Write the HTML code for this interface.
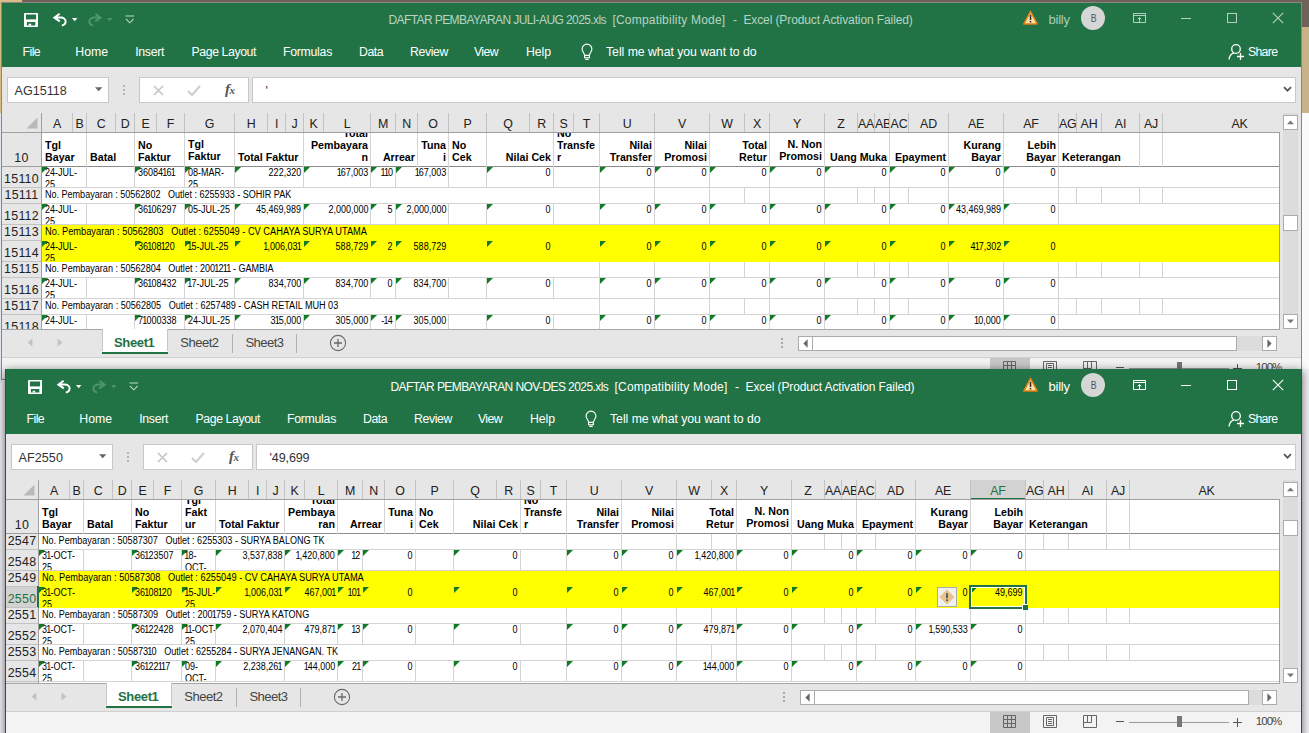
<!DOCTYPE html>
<html><head><meta charset="utf-8"><title>Excel</title><style>
html,body{margin:0;padding:0;}
body{width:1309px;height:733px;overflow:hidden;position:relative;background:#f2f2f5;font-family:'Liberation Sans',sans-serif;}
div,svg{position:absolute;}
i{font-style:normal;margin:0 -0.9px;}
</style></head><body>
<div style="left:0px;top:0px;width:1309px;height:733px;background:#f2f2f5;"></div>
<div style="left:0px;top:0px;width:1309px;height:28px;background:#6e6258;"></div>
<div style="left:0px;top:0px;width:22px;height:3px;background:#d9bd86;"></div>
<div style="left:0px;top:3px;width:2px;height:110px;background:#d6b97f;"></div>
<div style="left:0px;top:113px;width:2px;height:270px;background:#dfe6ee;"></div>
<div style="left:1302px;top:27px;width:7px;height:86px;background:#c9b188;"></div>
<div style="left:1302px;top:113px;width:7px;height:256px;background:#fbfbfd;"></div>
<div style="left:1px;top:2px;width:1301px;height:378px;background:#e6e6e6;border:1px solid #8a8686;box-sizing:border-box;"></div>
<div style="left:2px;top:3px;width:1299px;height:64px;background:#217346;"></div>
<svg style="left:24px;top:13px;" width="14" height="14" viewBox="0 0 14 14"><rect x="0" y="0" width="14" height="14" rx="0.8" fill="#fff"/><rect x="1.9" y="1.5" width="10.2" height="4.9" fill="#217346"/><rect x="2.9" y="9" width="8.4" height="3.5" fill="#217346"/><rect x="4.6" y="10.7" width="2.6" height="1.9" fill="#fff"/></svg>
<svg style="left:52px;top:12px;" width="16" height="16" viewBox="0 0 16 16"><path d="M7.6 1.8 L2.4 5.7 L7.8 9.3 M3 5.6 H8.6 C11.6 5.6 13.6 7.4 13.6 9.6 C13.6 11.8 12 13.2 9.8 13.6" fill="none" stroke="#fff" stroke-width="2" stroke-linecap="butt" stroke-linejoin="miter"/></svg>
<svg style="left:72px;top:18px;" width="6" height="4" viewBox="0 0 6 4"><path d="M0 0h5.4l-2.7 3.2z" fill="#fff"/></svg>
<svg style="left:87px;top:12px;" width="16" height="16" viewBox="0 0 16 16"><path d="M8.4 1.8 L13.6 5.7 L8.2 9.3 M13 5.6 H7.4 C4.4 5.6 2.4 7.4 2.4 9.6 C2.4 11.8 4 13.2 6.2 13.6" fill="none" stroke="#4f9470" stroke-width="2" stroke-linecap="butt" stroke-linejoin="miter"/></svg>
<svg style="left:107px;top:18px;" width="6" height="4" viewBox="0 0 6 4"><path d="M0 0h5.4l-2.7 3.2z" fill="#4f9470"/></svg>
<svg style="left:125px;top:14px;" width="10" height="10" viewBox="0 0 10 10"><path d="M0.5 2h8.6" stroke="#b4d2c1" stroke-width="1.1"/><path d="M1 5l3.8 3.8L8.6 5" fill="none" stroke="#b4d2c1" stroke-width="1.1"/></svg>
<div style="left:388.4px;top:13px;font-size:12px;color:#b9d3c4;font-weight:normal;letter-spacing:-0.585px;white-space:pre;line-height:14px;font-family:'Liberation Sans', sans-serif;">DAFTAR PEMBAYARAN JULI-AUG 2025.xls</div>
<div style="left:612.4px;top:13px;font-size:12px;color:#b9d3c4;font-weight:normal;letter-spacing:0.214px;white-space:pre;line-height:14px;font-family:'Liberation Sans', sans-serif;">[Compatibility Mode]</div>
<div style="left:733px;top:13px;font-size:12px;color:#b9d3c4;font-weight:normal;white-space:pre;line-height:14px;font-family:'Liberation Sans', sans-serif;">-</div>
<div style="left:743.4px;top:13px;font-size:12px;color:#b9d3c4;font-weight:normal;letter-spacing:-0.102px;white-space:pre;line-height:14px;font-family:'Liberation Sans', sans-serif;">Excel (Product Activation Failed)</div>
<svg style="left:1022px;top:10px;" width="17" height="16" viewBox="0 0 17 16"><path d="M8.5 1.3L15.2 13.9H1.8Z" fill="#f9e2a4" stroke="#e27d12" stroke-width="1.5" stroke-linejoin="round"/><path d="M8.5 4.8v5.2" stroke="#2a2a2a" stroke-width="1.5"/><rect x="7.75" y="11" width="1.5" height="1.5" fill="#2a2a2a"/></svg>
<div style="left:1048.4px;top:11.5px;font-size:13px;color:#a9cdb9;font-weight:normal;letter-spacing:-0.181px;white-space:pre;line-height:16px;font-family:'Liberation Sans', sans-serif;">billy</div>
<div style="left:1081px;top:6px;width:24px;height:24px;background:#d6d6d6;border-radius:50%;"></div>
<div style="left:1089.8px;top:11.5px;font-size:11px;color:#505068;font-weight:normal;white-space:pre;line-height:13px;font-family:'Liberation Sans', sans-serif;transform:scaleX(0.8);transform-origin:50% 50%;">B</div>
<svg style="left:1133px;top:13px;" width="13" height="10" viewBox="0 0 13 10"><path d="M0.5 0.5h12v9h-12z M0.5 2.5h12 M6.5 9.5v-5 M4.7 6.3l1.8-1.8 1.8 1.8" fill="none" stroke="#b4d2c2" stroke-width="1"/></svg>
<div style="left:1181px;top:18px;width:10px;height:1px;background:#b4d2c2;"></div>
<div style="left:1227px;top:13px;width:10px;height:10px;border:1px solid #b4d2c2;box-sizing:border-box;"></div>
<svg style="left:1272px;top:12px;" width="12" height="12" viewBox="0 0 12 12"><path d="M0.8 0.8l10.4 10.4M11.2 0.8L0.8 11.2" stroke="#b4d2c2" stroke-width="1.1"/></svg>
<svg style="left:1228px;top:43px;" width="17" height="18" viewBox="0 0 17 18"><circle cx="8" cy="6" r="4.3" fill="none" stroke="#fff" stroke-width="1.3"/><path d="M1 16.5c0.6-4 2.6-6 5-6.6" fill="none" stroke="#fff" stroke-width="1.3"/><path d="M12.5 10v7M9 13.5h7" stroke="#fff" stroke-width="1.3"/></svg>
<div style="left:1247.9px;top:45px;font-size:12.3px;color:#fff;font-weight:normal;letter-spacing:-0.666px;white-space:pre;line-height:15px;font-family:'Liberation Sans', sans-serif;">Share</div>
<div style="left:22.6px;top:45px;font-size:12.3px;color:#fff;font-weight:normal;letter-spacing:-0.582px;white-space:pre;line-height:15px;font-family:'Liberation Sans', sans-serif;">File</div>
<div style="left:75.3px;top:45px;font-size:12.3px;color:#fff;font-weight:normal;letter-spacing:-0.028px;white-space:pre;line-height:15px;font-family:'Liberation Sans', sans-serif;">Home</div>
<div style="left:135.3px;top:45px;font-size:12.3px;color:#fff;font-weight:normal;letter-spacing:-0.344px;white-space:pre;line-height:15px;font-family:'Liberation Sans', sans-serif;">Insert</div>
<div style="left:191.5px;top:45px;font-size:12.3px;color:#fff;font-weight:normal;letter-spacing:-0.415px;white-space:pre;line-height:15px;font-family:'Liberation Sans', sans-serif;">Page Layout</div>
<div style="left:283px;top:45px;font-size:12.3px;color:#fff;font-weight:normal;letter-spacing:-0.281px;white-space:pre;line-height:15px;font-family:'Liberation Sans', sans-serif;">Formulas</div>
<div style="left:359px;top:45px;font-size:12.3px;color:#fff;font-weight:normal;letter-spacing:-0.496px;white-space:pre;line-height:15px;font-family:'Liberation Sans', sans-serif;">Data</div>
<div style="left:410px;top:45px;font-size:12.3px;color:#fff;font-weight:normal;letter-spacing:-0.388px;white-space:pre;line-height:15px;font-family:'Liberation Sans', sans-serif;">Review</div>
<div style="left:474px;top:45px;font-size:12.3px;color:#fff;font-weight:normal;letter-spacing:-0.609px;white-space:pre;line-height:15px;font-family:'Liberation Sans', sans-serif;">View</div>
<div style="left:526px;top:45px;font-size:12.3px;color:#fff;font-weight:normal;letter-spacing:-0.074px;white-space:pre;line-height:15px;font-family:'Liberation Sans', sans-serif;">Help</div>
<div style="left:606px;top:45px;font-size:12.3px;color:#fff;font-weight:normal;letter-spacing:-0.046px;white-space:pre;line-height:15px;font-family:'Liberation Sans', sans-serif;">Tell me what you want to do</div>
<svg style="left:581px;top:43px;" width="12" height="18" viewBox="0 0 12 18"><path d="M3.6 12.3C3.4 10 1.1 8.7 1.1 6a4.9 4.9 0 0 1 9.8 0C10.9 8.7 8.6 10 8.4 12.3z M3.6 12.3v2.4h4.8v-2.4 M4.3 16.4h3.4" fill="none" stroke="#fff" stroke-width="1.15"/></svg>
<div style="left:7px;top:77px;width:102px;height:26px;background:#fff;border:1px solid #c8c8c8;box-sizing:border-box;"></div>
<div style="left:14.5px;top:84px;font-size:12.6px;color:#333;font-weight:normal;letter-spacing:0.003px;white-space:pre;line-height:15px;font-family:'Liberation Sans', sans-serif;">AG15118</div>
<svg style="left:95px;top:87px;" width="8" height="5" viewBox="0 0 8 5"><path d="M0 0.3h7.4l-3.7 4z" fill="#666"/></svg>
<div style="left:123px;top:85px;width:2px;height:2px;background:#b4b4b4;"></div>
<div style="left:123px;top:89px;width:2px;height:2px;background:#b4b4b4;"></div>
<div style="left:123px;top:93px;width:2px;height:2px;background:#b4b4b4;"></div>
<div style="left:139px;top:77px;width:110px;height:26px;background:#fff;border:1px solid #c8c8c8;box-sizing:border-box;"></div>
<svg style="left:153px;top:85px;" width="11" height="11" viewBox="0 0 11 11"><path d="M1 1l9 9M10 1l-9 9" stroke="#c6c6c6" stroke-width="1.7"/></svg>
<svg style="left:187px;top:85px;" width="14" height="11" viewBox="0 0 14 11"><path d="M1 6l4 4 8-9" fill="none" stroke="#d0d0d0" stroke-width="2.2"/></svg>
<div style="left:225px;top:80px;font-size:15px;color:#555;font-weight:bold;white-space:pre;line-height:18px;font-style:italic;font-family:'Liberation Serif', serif;">f</div>
<div style="left:229.5px;top:84px;font-size:11px;color:#555;font-weight:bold;white-space:pre;line-height:13px;font-style:italic;font-family:'Liberation Serif', serif;">x</div>
<div style="left:252px;top:77px;width:1044px;height:26px;background:#fff;border:1px solid #c8c8c8;box-sizing:border-box;"></div>
<div style="left:265.5px;top:84px;font-size:12.6px;color:#333;font-weight:normal;white-space:pre;line-height:15px;font-family:'Liberation Sans', sans-serif;">&#x27;</div>
<svg style="left:1283px;top:86px;" width="9" height="7" viewBox="0 0 9 7"><path d="M1 1.2l3.5 3.5 3.5-3.5" fill="none" stroke="#555" stroke-width="1.7"/></svg>
<svg style="left:26px;top:117px;" width="12" height="12" viewBox="0 0 12 12"><path d="M11.5 0.5v11h-11z" fill="#b9b9b9"/></svg>
<div style="left:42px;top:116px;width:30px;height:16px;line-height:16px;text-align:center;font-size:12.4px;color:#212121;overflow:hidden;letter-spacing:-0.2px;font-family:'Liberation Sans', sans-serif">A</div>
<div style="left:73px;top:116px;width:13px;height:16px;line-height:16px;text-align:center;font-size:12.4px;color:#212121;overflow:hidden;letter-spacing:-0.2px;font-family:'Liberation Sans', sans-serif">B</div>
<div style="left:87px;top:116px;width:28px;height:16px;line-height:16px;text-align:center;font-size:12.4px;color:#212121;overflow:hidden;letter-spacing:-0.2px;font-family:'Liberation Sans', sans-serif">C</div>
<div style="left:116px;top:116px;width:18px;height:16px;line-height:16px;text-align:center;font-size:12.4px;color:#212121;overflow:hidden;letter-spacing:-0.2px;font-family:'Liberation Sans', sans-serif">D</div>
<div style="left:135px;top:116px;width:21px;height:16px;line-height:16px;text-align:center;font-size:12.4px;color:#212121;overflow:hidden;letter-spacing:-0.2px;font-family:'Liberation Sans', sans-serif">E</div>
<div style="left:157px;top:116px;width:27px;height:16px;line-height:16px;text-align:center;font-size:12.4px;color:#212121;overflow:hidden;letter-spacing:-0.2px;font-family:'Liberation Sans', sans-serif">F</div>
<div style="left:185px;top:116px;width:49px;height:16px;line-height:16px;text-align:center;font-size:12.4px;color:#212121;overflow:hidden;letter-spacing:-0.2px;font-family:'Liberation Sans', sans-serif">G</div>
<div style="left:235px;top:116px;width:32px;height:16px;line-height:16px;text-align:center;font-size:12.4px;color:#212121;overflow:hidden;letter-spacing:-0.2px;font-family:'Liberation Sans', sans-serif">H</div>
<div style="left:268px;top:116px;width:17px;height:16px;line-height:16px;text-align:center;font-size:12.4px;color:#212121;overflow:hidden;letter-spacing:-0.2px;font-family:'Liberation Sans', sans-serif">I</div>
<div style="left:286px;top:116px;width:17px;height:16px;line-height:16px;text-align:center;font-size:12.4px;color:#212121;overflow:hidden;letter-spacing:-0.2px;font-family:'Liberation Sans', sans-serif">J</div>
<div style="left:304px;top:116px;width:19px;height:16px;line-height:16px;text-align:center;font-size:12.4px;color:#212121;overflow:hidden;letter-spacing:-0.2px;font-family:'Liberation Sans', sans-serif">K</div>
<div style="left:324px;top:116px;width:46px;height:16px;line-height:16px;text-align:center;font-size:12.4px;color:#212121;overflow:hidden;letter-spacing:-0.2px;font-family:'Liberation Sans', sans-serif">L</div>
<div style="left:371px;top:116px;width:24px;height:16px;line-height:16px;text-align:center;font-size:12.4px;color:#212121;overflow:hidden;letter-spacing:-0.2px;font-family:'Liberation Sans', sans-serif">M</div>
<div style="left:396px;top:116px;width:21px;height:16px;line-height:16px;text-align:center;font-size:12.4px;color:#212121;overflow:hidden;letter-spacing:-0.2px;font-family:'Liberation Sans', sans-serif">N</div>
<div style="left:418px;top:116px;width:30px;height:16px;line-height:16px;text-align:center;font-size:12.4px;color:#212121;overflow:hidden;letter-spacing:-0.2px;font-family:'Liberation Sans', sans-serif">O</div>
<div style="left:449px;top:116px;width:37px;height:16px;line-height:16px;text-align:center;font-size:12.4px;color:#212121;overflow:hidden;letter-spacing:-0.2px;font-family:'Liberation Sans', sans-serif">P</div>
<div style="left:487px;top:116px;width:42px;height:16px;line-height:16px;text-align:center;font-size:12.4px;color:#212121;overflow:hidden;letter-spacing:-0.2px;font-family:'Liberation Sans', sans-serif">Q</div>
<div style="left:530px;top:116px;width:23px;height:16px;line-height:16px;text-align:center;font-size:12.4px;color:#212121;overflow:hidden;letter-spacing:-0.2px;font-family:'Liberation Sans', sans-serif">R</div>
<div style="left:554px;top:116px;width:19px;height:16px;line-height:16px;text-align:center;font-size:12.4px;color:#212121;overflow:hidden;letter-spacing:-0.2px;font-family:'Liberation Sans', sans-serif">S</div>
<div style="left:574px;top:116px;width:25px;height:16px;line-height:16px;text-align:center;font-size:12.4px;color:#212121;overflow:hidden;letter-spacing:-0.2px;font-family:'Liberation Sans', sans-serif">T</div>
<div style="left:600px;top:116px;width:54px;height:16px;line-height:16px;text-align:center;font-size:12.4px;color:#212121;overflow:hidden;letter-spacing:-0.2px;font-family:'Liberation Sans', sans-serif">U</div>
<div style="left:655px;top:116px;width:54px;height:16px;line-height:16px;text-align:center;font-size:12.4px;color:#212121;overflow:hidden;letter-spacing:-0.2px;font-family:'Liberation Sans', sans-serif">V</div>
<div style="left:710px;top:116px;width:34px;height:16px;line-height:16px;text-align:center;font-size:12.4px;color:#212121;overflow:hidden;letter-spacing:-0.2px;font-family:'Liberation Sans', sans-serif">W</div>
<div style="left:745px;top:116px;width:24px;height:16px;line-height:16px;text-align:center;font-size:12.4px;color:#212121;overflow:hidden;letter-spacing:-0.2px;font-family:'Liberation Sans', sans-serif">X</div>
<div style="left:770px;top:116px;width:54px;height:16px;line-height:16px;text-align:center;font-size:12.4px;color:#212121;overflow:hidden;letter-spacing:-0.2px;font-family:'Liberation Sans', sans-serif">Y</div>
<div style="left:825px;top:116px;width:32px;height:16px;line-height:16px;text-align:center;font-size:12.4px;color:#212121;overflow:hidden;letter-spacing:-0.2px;font-family:'Liberation Sans', sans-serif">Z</div>
<div style="left:858px;top:116px;width:16px;height:16px;line-height:16px;text-align:center;font-size:12.4px;color:#212121;overflow:hidden;letter-spacing:-0.2px;font-family:'Liberation Sans', sans-serif">AA</div>
<div style="left:875px;top:116px;width:14px;height:16px;line-height:16px;text-align:center;font-size:12.4px;color:#212121;overflow:hidden;letter-spacing:-0.2px;font-family:'Liberation Sans', sans-serif">AB</div>
<div style="left:890px;top:116px;width:18px;height:16px;line-height:16px;text-align:center;font-size:12.4px;color:#212121;overflow:hidden;letter-spacing:-0.2px;font-family:'Liberation Sans', sans-serif">AC</div>
<div style="left:909px;top:116px;width:39px;height:16px;line-height:16px;text-align:center;font-size:12.4px;color:#212121;overflow:hidden;letter-spacing:-0.2px;font-family:'Liberation Sans', sans-serif">AD</div>
<div style="left:949px;top:116px;width:54px;height:16px;line-height:16px;text-align:center;font-size:12.4px;color:#212121;overflow:hidden;letter-spacing:-0.2px;font-family:'Liberation Sans', sans-serif">AE</div>
<div style="left:1004px;top:116px;width:54px;height:16px;line-height:16px;text-align:center;font-size:12.4px;color:#212121;overflow:hidden;letter-spacing:-0.2px;font-family:'Liberation Sans', sans-serif">AF</div>
<div style="left:1059px;top:116px;width:17px;height:16px;line-height:16px;text-align:center;font-size:12.4px;color:#212121;overflow:hidden;letter-spacing:-0.2px;font-family:'Liberation Sans', sans-serif">AG</div>
<div style="left:1077px;top:116px;width:24px;height:16px;line-height:16px;text-align:center;font-size:12.4px;color:#212121;overflow:hidden;letter-spacing:-0.2px;font-family:'Liberation Sans', sans-serif">AH</div>
<div style="left:1102px;top:116px;width:37px;height:16px;line-height:16px;text-align:center;font-size:12.4px;color:#212121;overflow:hidden;letter-spacing:-0.2px;font-family:'Liberation Sans', sans-serif">AI</div>
<div style="left:1140px;top:116px;width:22px;height:16px;line-height:16px;text-align:center;font-size:12.4px;color:#212121;overflow:hidden;letter-spacing:-0.2px;font-family:'Liberation Sans', sans-serif">AJ</div>
<div style="left:1163px;top:116px;width:153px;height:16px;line-height:16px;text-align:center;font-size:12.4px;color:#212121;overflow:hidden;letter-spacing:-0.2px;font-family:'Liberation Sans', sans-serif">AK</div>
<div style="left:41px;top:113px;width:1px;height:19px;background:#9f9f9f;"></div>
<div style="left:72px;top:113px;width:1px;height:19px;background:#c3c3c3;"></div>
<div style="left:86px;top:113px;width:1px;height:19px;background:#c3c3c3;"></div>
<div style="left:115px;top:113px;width:1px;height:19px;background:#c3c3c3;"></div>
<div style="left:134px;top:113px;width:1px;height:19px;background:#c3c3c3;"></div>
<div style="left:156px;top:113px;width:1px;height:19px;background:#c3c3c3;"></div>
<div style="left:184px;top:113px;width:1px;height:19px;background:#c3c3c3;"></div>
<div style="left:234px;top:113px;width:1px;height:19px;background:#c3c3c3;"></div>
<div style="left:267px;top:113px;width:1px;height:19px;background:#c3c3c3;"></div>
<div style="left:285px;top:113px;width:1px;height:19px;background:#c3c3c3;"></div>
<div style="left:303px;top:113px;width:1px;height:19px;background:#c3c3c3;"></div>
<div style="left:323px;top:113px;width:1px;height:19px;background:#c3c3c3;"></div>
<div style="left:370px;top:113px;width:1px;height:19px;background:#c3c3c3;"></div>
<div style="left:395px;top:113px;width:1px;height:19px;background:#c3c3c3;"></div>
<div style="left:417px;top:113px;width:1px;height:19px;background:#c3c3c3;"></div>
<div style="left:448px;top:113px;width:1px;height:19px;background:#c3c3c3;"></div>
<div style="left:486px;top:113px;width:1px;height:19px;background:#c3c3c3;"></div>
<div style="left:529px;top:113px;width:1px;height:19px;background:#c3c3c3;"></div>
<div style="left:553px;top:113px;width:1px;height:19px;background:#c3c3c3;"></div>
<div style="left:573px;top:113px;width:1px;height:19px;background:#c3c3c3;"></div>
<div style="left:599px;top:113px;width:1px;height:19px;background:#c3c3c3;"></div>
<div style="left:654px;top:113px;width:1px;height:19px;background:#c3c3c3;"></div>
<div style="left:709px;top:113px;width:1px;height:19px;background:#c3c3c3;"></div>
<div style="left:744px;top:113px;width:1px;height:19px;background:#c3c3c3;"></div>
<div style="left:769px;top:113px;width:1px;height:19px;background:#c3c3c3;"></div>
<div style="left:824px;top:113px;width:1px;height:19px;background:#c3c3c3;"></div>
<div style="left:857px;top:113px;width:1px;height:19px;background:#c3c3c3;"></div>
<div style="left:874px;top:113px;width:1px;height:19px;background:#c3c3c3;"></div>
<div style="left:889px;top:113px;width:1px;height:19px;background:#c3c3c3;"></div>
<div style="left:908px;top:113px;width:1px;height:19px;background:#c3c3c3;"></div>
<div style="left:948px;top:113px;width:1px;height:19px;background:#c3c3c3;"></div>
<div style="left:1003px;top:113px;width:1px;height:19px;background:#c3c3c3;"></div>
<div style="left:1058px;top:113px;width:1px;height:19px;background:#c3c3c3;"></div>
<div style="left:1076px;top:113px;width:1px;height:19px;background:#c3c3c3;"></div>
<div style="left:1101px;top:113px;width:1px;height:19px;background:#c3c3c3;"></div>
<div style="left:1139px;top:113px;width:1px;height:19px;background:#c3c3c3;"></div>
<div style="left:1162px;top:113px;width:1px;height:19px;background:#c3c3c3;"></div>
<div style="left:2px;top:132px;width:1278px;height:1px;background:#9f9f9f;"></div>
<div style="left:42px;top:133px;width:1237px;height:196px;background:#fff;"></div>
<div style="left:1279px;top:133px;width:1px;height:196px;background:#9f9f9f;"></div>
<div style="left:41px;top:133px;width:1px;height:196px;background:#9f9f9f;"></div>
<div style="left:2px;top:166px;width:39px;height:1px;background:#9f9f9f;"></div>
<div style="left:2px;top:133px;width:39px;height:33px;overflow:hidden;font-family:'Liberation Sans', sans-serif"><div style="left:0;top:17px;width:100%;text-align:center;font-size:12.4px;line-height:16px;letter-spacing:0.25px;color:#212121">10</div></div>
<div style="left:42px;top:166px;width:1237px;height:1px;background:#8c8c8c;"></div>
<div style="left:86px;top:133px;width:1px;height:34px;background:#d4d4d4;"></div>
<div style="left:42px;top:133px;width:44px;height:33px;overflow:hidden;font-family:'Liberation Sans', sans-serif"><div style="left:3px;transform-origin:0 0;top:6px;text-align:left;white-space:pre;font-size:10.67px;line-height:12px;letter-spacing:0.02px;color:#000;font-weight:bold;">Tgl<br>Bayar</div></div>
<div style="left:134px;top:133px;width:1px;height:34px;background:#d4d4d4;"></div>
<div style="left:87px;top:133px;width:47px;height:33px;overflow:hidden;font-family:'Liberation Sans', sans-serif"><div style="left:3px;transform-origin:0 0;top:18px;text-align:left;white-space:pre;font-size:10.67px;line-height:12px;letter-spacing:0.02px;color:#000;font-weight:bold;">Batal</div></div>
<div style="left:184px;top:133px;width:1px;height:34px;background:#d4d4d4;"></div>
<div style="left:135px;top:133px;width:49px;height:33px;overflow:hidden;font-family:'Liberation Sans', sans-serif"><div style="left:3px;transform-origin:0 0;top:6px;text-align:left;white-space:pre;font-size:10.67px;line-height:12px;letter-spacing:0.02px;color:#000;font-weight:bold;">No<br>Faktur</div></div>
<div style="left:234px;top:133px;width:1px;height:34px;background:#d4d4d4;"></div>
<div style="left:185px;top:133px;width:49px;height:33px;overflow:hidden;font-family:'Liberation Sans', sans-serif"><div style="left:3px;transform-origin:0 0;top:5px;text-align:left;white-space:pre;font-size:10.67px;line-height:12px;letter-spacing:0.02px;color:#000;font-weight:bold;">Tgl<br>Faktur</div></div>
<div style="left:303px;top:133px;width:1px;height:34px;background:#d4d4d4;"></div>
<div style="left:235px;top:133px;width:68px;height:33px;overflow:hidden;font-family:'Liberation Sans', sans-serif"><div style="left:3px;transform-origin:0 0;top:18px;text-align:left;white-space:pre;font-size:10.67px;line-height:12px;letter-spacing:0.02px;color:#000;font-weight:bold;">Total Faktur</div></div>
<div style="left:370px;top:133px;width:1px;height:34px;background:#d4d4d4;"></div>
<div style="left:304px;top:133px;width:66px;height:33px;overflow:hidden;font-family:'Liberation Sans', sans-serif"><div style="right:2px;transform-origin:100% 0;top:-6px;text-align:right;white-space:pre;font-size:10.67px;line-height:12px;letter-spacing:0.02px;color:#000;font-weight:bold;">Total<br>Pembayara<br>n</div></div>
<div style="left:417px;top:133px;width:1px;height:34px;background:#d4d4d4;"></div>
<div style="left:371px;top:133px;width:46px;height:33px;overflow:hidden;font-family:'Liberation Sans', sans-serif"><div style="right:2px;transform-origin:100% 0;top:18px;text-align:right;white-space:pre;font-size:10.67px;line-height:12px;letter-spacing:0.02px;color:#000;font-weight:bold;">Arrear</div></div>
<div style="left:448px;top:133px;width:1px;height:34px;background:#d4d4d4;"></div>
<div style="left:418px;top:133px;width:30px;height:33px;overflow:hidden;font-family:'Liberation Sans', sans-serif"><div style="right:2px;transform-origin:100% 0;top:6px;text-align:right;white-space:pre;font-size:10.67px;line-height:12px;letter-spacing:0.02px;color:#000;font-weight:bold;">Tuna<br>i</div></div>
<div style="left:486px;top:133px;width:1px;height:34px;background:#d4d4d4;"></div>
<div style="left:449px;top:133px;width:37px;height:33px;overflow:hidden;font-family:'Liberation Sans', sans-serif"><div style="left:3px;transform-origin:0 0;top:6px;text-align:left;white-space:pre;font-size:10.67px;line-height:12px;letter-spacing:0.02px;color:#000;font-weight:bold;">No<br>Cek</div></div>
<div style="left:553px;top:133px;width:1px;height:34px;background:#d4d4d4;"></div>
<div style="left:487px;top:133px;width:66px;height:33px;overflow:hidden;font-family:'Liberation Sans', sans-serif"><div style="right:2px;transform-origin:100% 0;top:18px;text-align:right;white-space:pre;font-size:10.67px;line-height:12px;letter-spacing:0.02px;color:#000;font-weight:bold;">Nilai Cek</div></div>
<div style="left:599px;top:133px;width:1px;height:34px;background:#d4d4d4;"></div>
<div style="left:554px;top:133px;width:45px;height:33px;overflow:hidden;font-family:'Liberation Sans', sans-serif"><div style="left:3px;transform-origin:0 0;top:-6px;text-align:left;white-space:pre;font-size:10.67px;line-height:12px;letter-spacing:0.02px;color:#000;font-weight:bold;">No<br>Transfe<br>r</div></div>
<div style="left:654px;top:133px;width:1px;height:34px;background:#d4d4d4;"></div>
<div style="left:600px;top:133px;width:54px;height:33px;overflow:hidden;font-family:'Liberation Sans', sans-serif"><div style="right:2px;transform-origin:100% 0;top:6px;text-align:right;white-space:pre;font-size:10.67px;line-height:12px;letter-spacing:0.02px;color:#000;font-weight:bold;">Nilai<br>Transfer</div></div>
<div style="left:709px;top:133px;width:1px;height:34px;background:#d4d4d4;"></div>
<div style="left:655px;top:133px;width:54px;height:33px;overflow:hidden;font-family:'Liberation Sans', sans-serif"><div style="right:2px;transform-origin:100% 0;top:6px;text-align:right;white-space:pre;font-size:10.67px;line-height:12px;letter-spacing:0.02px;color:#000;font-weight:bold;">Nilai<br>Promosi</div></div>
<div style="left:769px;top:133px;width:1px;height:34px;background:#d4d4d4;"></div>
<div style="left:710px;top:133px;width:59px;height:33px;overflow:hidden;font-family:'Liberation Sans', sans-serif"><div style="right:2px;transform-origin:100% 0;top:6px;text-align:right;white-space:pre;font-size:10.67px;line-height:12px;letter-spacing:0.02px;color:#000;font-weight:bold;">Total<br>Retur</div></div>
<div style="left:824px;top:133px;width:1px;height:34px;background:#d4d4d4;"></div>
<div style="left:770px;top:133px;width:54px;height:33px;overflow:hidden;font-family:'Liberation Sans', sans-serif"><div style="right:2px;transform-origin:100% 0;top:5px;text-align:right;white-space:pre;font-size:10.67px;line-height:12px;letter-spacing:0.02px;color:#000;font-weight:bold;">N. Non<br>Promosi</div></div>
<div style="left:889px;top:133px;width:1px;height:34px;background:#d4d4d4;"></div>
<div style="left:825px;top:133px;width:64px;height:33px;overflow:hidden;font-family:'Liberation Sans', sans-serif"><div style="right:2px;transform-origin:100% 0;top:18px;text-align:right;white-space:pre;font-size:10.67px;line-height:12px;letter-spacing:0.02px;color:#000;font-weight:bold;">Uang Muka</div></div>
<div style="left:948px;top:133px;width:1px;height:34px;background:#d4d4d4;"></div>
<div style="left:890px;top:133px;width:58px;height:33px;overflow:hidden;font-family:'Liberation Sans', sans-serif"><div style="right:2px;transform-origin:100% 0;top:18px;text-align:right;white-space:pre;font-size:10.67px;line-height:12px;letter-spacing:0.02px;color:#000;font-weight:bold;">Epayment</div></div>
<div style="left:1003px;top:133px;width:1px;height:34px;background:#d4d4d4;"></div>
<div style="left:949px;top:133px;width:54px;height:33px;overflow:hidden;font-family:'Liberation Sans', sans-serif"><div style="right:2px;transform-origin:100% 0;top:6px;text-align:right;white-space:pre;font-size:10.67px;line-height:12px;letter-spacing:0.02px;color:#000;font-weight:bold;">Kurang<br>Bayar</div></div>
<div style="left:1058px;top:133px;width:1px;height:34px;background:#d4d4d4;"></div>
<div style="left:1004px;top:133px;width:54px;height:33px;overflow:hidden;font-family:'Liberation Sans', sans-serif"><div style="right:2px;transform-origin:100% 0;top:6px;text-align:right;white-space:pre;font-size:10.67px;line-height:12px;letter-spacing:0.02px;color:#000;font-weight:bold;">Lebih<br>Bayar</div></div>
<div style="left:1139px;top:133px;width:1px;height:34px;background:#d4d4d4;"></div>
<div style="left:1059px;top:133px;width:80px;height:33px;overflow:hidden;font-family:'Liberation Sans', sans-serif"><div style="left:3px;transform-origin:0 0;top:18px;text-align:left;white-space:pre;font-size:10.67px;line-height:12px;letter-spacing:0.02px;color:#000;font-weight:bold;">Keterangan</div></div>
<div style="left:1162px;top:133px;width:1px;height:34px;background:#d4d4d4;"></div>
<div style="left:2px;top:187px;width:39px;height:1px;background:#c3c3c3;"></div>
<div style="left:2px;top:167px;width:39px;height:20px;overflow:hidden;font-family:'Liberation Sans', sans-serif"><div style="left:0;top:4px;width:100%;text-align:center;font-size:12.4px;line-height:16px;letter-spacing:0.25px;color:#212121">15110</div></div>
<div style="left:42px;top:187px;width:1237px;height:1px;background:#d4d4d4;"></div>
<div style="left:86px;top:167px;width:1px;height:21px;background:#d4d4d4;"></div>
<svg style="left:42px;top:167px;" width="6" height="6" viewBox="0 0 6 6"><path d="M0 0h6L0 6z" fill="#0f7b24"/></svg>
<div style="left:42px;top:167px;width:44px;height:20px;overflow:hidden;font-family:'Liberation Sans', sans-serif"><div style="left:3px;transform-origin:0 0;top:0px;text-align:left;white-space:pre;transform:scaleX(0.9);font-size:10px;line-height:12px;letter-spacing:0px;color:#000;">24-JUL-<br>25</div></div>
<div style="left:134px;top:167px;width:1px;height:21px;background:#d4d4d4;"></div>
<div style="left:184px;top:167px;width:1px;height:21px;background:#d4d4d4;"></div>
<svg style="left:135px;top:167px;" width="6" height="6" viewBox="0 0 6 6"><path d="M0 0h6L0 6z" fill="#0f7b24"/></svg>
<div style="left:135px;top:167px;width:49px;height:20px;overflow:hidden;font-family:'Liberation Sans', sans-serif"><div style="left:3px;transform-origin:0 0;top:0px;text-align:left;white-space:pre;transform:scaleX(0.9);font-size:10px;line-height:12px;letter-spacing:0px;color:#000;">36084<i>1</i>6<i>1</i></div></div>
<div style="left:234px;top:167px;width:1px;height:21px;background:#d4d4d4;"></div>
<svg style="left:185px;top:167px;" width="6" height="6" viewBox="0 0 6 6"><path d="M0 0h6L0 6z" fill="#0f7b24"/></svg>
<div style="left:185px;top:167px;width:49px;height:20px;overflow:hidden;font-family:'Liberation Sans', sans-serif"><div style="left:3px;transform-origin:0 0;top:0px;text-align:left;white-space:pre;transform:scaleX(0.9);font-size:10px;line-height:12px;letter-spacing:0px;color:#000;">08-MAR-<br>25</div></div>
<div style="left:303px;top:167px;width:1px;height:21px;background:#d4d4d4;"></div>
<svg style="left:235px;top:167px;" width="6" height="6" viewBox="0 0 6 6"><path d="M0 0h6L0 6z" fill="#0f7b24"/></svg>
<div style="left:235px;top:167px;width:68px;height:20px;overflow:hidden;font-family:'Liberation Sans', sans-serif"><div style="right:2px;transform-origin:100% 0;top:0px;text-align:right;white-space:pre;transform:scaleX(0.9);font-size:10px;line-height:12px;letter-spacing:0px;color:#000;">222,320</div></div>
<div style="left:370px;top:167px;width:1px;height:21px;background:#d4d4d4;"></div>
<svg style="left:304px;top:167px;" width="6" height="6" viewBox="0 0 6 6"><path d="M0 0h6L0 6z" fill="#0f7b24"/></svg>
<div style="left:304px;top:167px;width:66px;height:20px;overflow:hidden;font-family:'Liberation Sans', sans-serif"><div style="right:2px;transform-origin:100% 0;top:0px;text-align:right;white-space:pre;transform:scaleX(0.9);font-size:10px;line-height:12px;letter-spacing:0px;color:#000;"><i>1</i>67,003</div></div>
<div style="left:395px;top:167px;width:1px;height:21px;background:#d4d4d4;"></div>
<svg style="left:371px;top:167px;" width="6" height="6" viewBox="0 0 6 6"><path d="M0 0h6L0 6z" fill="#0f7b24"/></svg>
<div style="left:371px;top:167px;width:24px;height:20px;overflow:hidden;font-family:'Liberation Sans', sans-serif"><div style="right:2px;transform-origin:100% 0;top:0px;text-align:right;white-space:pre;transform:scaleX(0.9);font-size:10px;line-height:12px;letter-spacing:0px;color:#000;"><i>1</i><i>1</i>0</div></div>
<div style="left:448px;top:167px;width:1px;height:21px;background:#d4d4d4;"></div>
<svg style="left:396px;top:167px;" width="6" height="6" viewBox="0 0 6 6"><path d="M0 0h6L0 6z" fill="#0f7b24"/></svg>
<div style="left:396px;top:167px;width:52px;height:20px;overflow:hidden;font-family:'Liberation Sans', sans-serif"><div style="right:2px;transform-origin:100% 0;top:0px;text-align:right;white-space:pre;transform:scaleX(0.9);font-size:10px;line-height:12px;letter-spacing:0px;color:#000;"><i>1</i>67,003</div></div>
<div style="left:486px;top:167px;width:1px;height:21px;background:#d4d4d4;"></div>
<div style="left:553px;top:167px;width:1px;height:21px;background:#d4d4d4;"></div>
<svg style="left:487px;top:167px;" width="6" height="6" viewBox="0 0 6 6"><path d="M0 0h6L0 6z" fill="#0f7b24"/></svg>
<div style="left:487px;top:167px;width:66px;height:20px;overflow:hidden;font-family:'Liberation Sans', sans-serif"><div style="right:2px;transform-origin:100% 0;top:0px;text-align:right;white-space:pre;transform:scaleX(0.9);font-size:10px;line-height:12px;letter-spacing:0px;color:#000;">0</div></div>
<div style="left:599px;top:167px;width:1px;height:21px;background:#d4d4d4;"></div>
<div style="left:654px;top:167px;width:1px;height:21px;background:#d4d4d4;"></div>
<svg style="left:600px;top:167px;" width="6" height="6" viewBox="0 0 6 6"><path d="M0 0h6L0 6z" fill="#0f7b24"/></svg>
<div style="left:600px;top:167px;width:54px;height:20px;overflow:hidden;font-family:'Liberation Sans', sans-serif"><div style="right:2px;transform-origin:100% 0;top:0px;text-align:right;white-space:pre;transform:scaleX(0.9);font-size:10px;line-height:12px;letter-spacing:0px;color:#000;">0</div></div>
<div style="left:709px;top:167px;width:1px;height:21px;background:#d4d4d4;"></div>
<svg style="left:655px;top:167px;" width="6" height="6" viewBox="0 0 6 6"><path d="M0 0h6L0 6z" fill="#0f7b24"/></svg>
<div style="left:655px;top:167px;width:54px;height:20px;overflow:hidden;font-family:'Liberation Sans', sans-serif"><div style="right:2px;transform-origin:100% 0;top:0px;text-align:right;white-space:pre;transform:scaleX(0.9);font-size:10px;line-height:12px;letter-spacing:0px;color:#000;">0</div></div>
<div style="left:769px;top:167px;width:1px;height:21px;background:#d4d4d4;"></div>
<svg style="left:710px;top:167px;" width="6" height="6" viewBox="0 0 6 6"><path d="M0 0h6L0 6z" fill="#0f7b24"/></svg>
<div style="left:710px;top:167px;width:59px;height:20px;overflow:hidden;font-family:'Liberation Sans', sans-serif"><div style="right:2px;transform-origin:100% 0;top:0px;text-align:right;white-space:pre;transform:scaleX(0.9);font-size:10px;line-height:12px;letter-spacing:0px;color:#000;">0</div></div>
<div style="left:824px;top:167px;width:1px;height:21px;background:#d4d4d4;"></div>
<svg style="left:770px;top:167px;" width="6" height="6" viewBox="0 0 6 6"><path d="M0 0h6L0 6z" fill="#0f7b24"/></svg>
<div style="left:770px;top:167px;width:54px;height:20px;overflow:hidden;font-family:'Liberation Sans', sans-serif"><div style="right:2px;transform-origin:100% 0;top:0px;text-align:right;white-space:pre;transform:scaleX(0.9);font-size:10px;line-height:12px;letter-spacing:0px;color:#000;">0</div></div>
<div style="left:889px;top:167px;width:1px;height:21px;background:#d4d4d4;"></div>
<svg style="left:825px;top:167px;" width="6" height="6" viewBox="0 0 6 6"><path d="M0 0h6L0 6z" fill="#0f7b24"/></svg>
<div style="left:825px;top:167px;width:64px;height:20px;overflow:hidden;font-family:'Liberation Sans', sans-serif"><div style="right:2px;transform-origin:100% 0;top:0px;text-align:right;white-space:pre;transform:scaleX(0.9);font-size:10px;line-height:12px;letter-spacing:0px;color:#000;">0</div></div>
<div style="left:948px;top:167px;width:1px;height:21px;background:#d4d4d4;"></div>
<svg style="left:890px;top:167px;" width="6" height="6" viewBox="0 0 6 6"><path d="M0 0h6L0 6z" fill="#0f7b24"/></svg>
<div style="left:890px;top:167px;width:58px;height:20px;overflow:hidden;font-family:'Liberation Sans', sans-serif"><div style="right:2px;transform-origin:100% 0;top:0px;text-align:right;white-space:pre;transform:scaleX(0.9);font-size:10px;line-height:12px;letter-spacing:0px;color:#000;">0</div></div>
<div style="left:1003px;top:167px;width:1px;height:21px;background:#d4d4d4;"></div>
<svg style="left:949px;top:167px;" width="6" height="6" viewBox="0 0 6 6"><path d="M0 0h6L0 6z" fill="#0f7b24"/></svg>
<div style="left:949px;top:167px;width:54px;height:20px;overflow:hidden;font-family:'Liberation Sans', sans-serif"><div style="right:2px;transform-origin:100% 0;top:0px;text-align:right;white-space:pre;transform:scaleX(0.9);font-size:10px;line-height:12px;letter-spacing:0px;color:#000;">0</div></div>
<div style="left:1058px;top:167px;width:1px;height:21px;background:#d4d4d4;"></div>
<svg style="left:1004px;top:167px;" width="6" height="6" viewBox="0 0 6 6"><path d="M0 0h6L0 6z" fill="#0f7b24"/></svg>
<div style="left:1004px;top:167px;width:54px;height:20px;overflow:hidden;font-family:'Liberation Sans', sans-serif"><div style="right:2px;transform-origin:100% 0;top:0px;text-align:right;white-space:pre;transform:scaleX(0.9);font-size:10px;line-height:12px;letter-spacing:0px;color:#000;">0</div></div>
<div style="left:2px;top:203px;width:39px;height:1px;background:#c3c3c3;"></div>
<div style="left:2px;top:188px;width:39px;height:15px;overflow:hidden;font-family:'Liberation Sans', sans-serif"><div style="left:0;top:-1px;width:100%;text-align:center;font-size:12.4px;line-height:16px;letter-spacing:0.25px;color:#212121">15111</div></div>
<div style="left:42px;top:203px;width:1237px;height:1px;background:#d4d4d4;"></div>
<div style="left:599px;top:188px;width:1px;height:16px;background:#d4d4d4;"></div>
<div style="left:42px;top:188px;width:557px;height:15px;overflow:hidden;font-family:'Liberation Sans', sans-serif"><div style="left:3px;transform-origin:0 0;top:1px;text-align:left;white-space:pre;transform:scaleX(0.9027);font-size:10px;line-height:12px;letter-spacing:0px;color:#000;">No. Pembayaran : 50562802   Outlet : 6255933 - SOHIR PAK</div></div>
<div style="left:654px;top:188px;width:1px;height:16px;background:#d4d4d4;"></div>
<div style="left:709px;top:188px;width:1px;height:16px;background:#d4d4d4;"></div>
<div style="left:744px;top:188px;width:1px;height:16px;background:#d4d4d4;"></div>
<div style="left:769px;top:188px;width:1px;height:16px;background:#d4d4d4;"></div>
<div style="left:824px;top:188px;width:1px;height:16px;background:#d4d4d4;"></div>
<div style="left:857px;top:188px;width:1px;height:16px;background:#d4d4d4;"></div>
<div style="left:874px;top:188px;width:1px;height:16px;background:#d4d4d4;"></div>
<div style="left:889px;top:188px;width:1px;height:16px;background:#d4d4d4;"></div>
<div style="left:908px;top:188px;width:1px;height:16px;background:#d4d4d4;"></div>
<div style="left:948px;top:188px;width:1px;height:16px;background:#d4d4d4;"></div>
<div style="left:1003px;top:188px;width:1px;height:16px;background:#d4d4d4;"></div>
<div style="left:1058px;top:188px;width:1px;height:16px;background:#d4d4d4;"></div>
<div style="left:1076px;top:188px;width:1px;height:16px;background:#d4d4d4;"></div>
<div style="left:1101px;top:188px;width:1px;height:16px;background:#d4d4d4;"></div>
<div style="left:1139px;top:188px;width:1px;height:16px;background:#d4d4d4;"></div>
<div style="left:1162px;top:188px;width:1px;height:16px;background:#d4d4d4;"></div>
<div style="left:2px;top:224px;width:39px;height:1px;background:#c3c3c3;"></div>
<div style="left:2px;top:204px;width:39px;height:20px;overflow:hidden;font-family:'Liberation Sans', sans-serif"><div style="left:0;top:4px;width:100%;text-align:center;font-size:12.4px;line-height:16px;letter-spacing:0.25px;color:#212121">15112</div></div>
<div style="left:42px;top:224px;width:1237px;height:1px;background:#d4d4d4;"></div>
<div style="left:86px;top:204px;width:1px;height:21px;background:#d4d4d4;"></div>
<svg style="left:42px;top:204px;" width="6" height="6" viewBox="0 0 6 6"><path d="M0 0h6L0 6z" fill="#0f7b24"/></svg>
<div style="left:42px;top:204px;width:44px;height:20px;overflow:hidden;font-family:'Liberation Sans', sans-serif"><div style="left:3px;transform-origin:0 0;top:0px;text-align:left;white-space:pre;transform:scaleX(0.9);font-size:10px;line-height:12px;letter-spacing:0px;color:#000;">24-JUL-<br>25</div></div>
<div style="left:134px;top:204px;width:1px;height:21px;background:#d4d4d4;"></div>
<div style="left:184px;top:204px;width:1px;height:21px;background:#d4d4d4;"></div>
<svg style="left:135px;top:204px;" width="6" height="6" viewBox="0 0 6 6"><path d="M0 0h6L0 6z" fill="#0f7b24"/></svg>
<div style="left:135px;top:204px;width:49px;height:20px;overflow:hidden;font-family:'Liberation Sans', sans-serif"><div style="left:3px;transform-origin:0 0;top:0px;text-align:left;white-space:pre;transform:scaleX(0.9);font-size:10px;line-height:12px;letter-spacing:0px;color:#000;">36<i>1</i>06297</div></div>
<div style="left:234px;top:204px;width:1px;height:21px;background:#d4d4d4;"></div>
<svg style="left:185px;top:204px;" width="6" height="6" viewBox="0 0 6 6"><path d="M0 0h6L0 6z" fill="#0f7b24"/></svg>
<div style="left:185px;top:204px;width:49px;height:20px;overflow:hidden;font-family:'Liberation Sans', sans-serif"><div style="left:3px;transform-origin:0 0;top:0px;text-align:left;white-space:pre;transform:scaleX(0.9);font-size:10px;line-height:12px;letter-spacing:0px;color:#000;">05-JUL-25</div></div>
<div style="left:303px;top:204px;width:1px;height:21px;background:#d4d4d4;"></div>
<svg style="left:235px;top:204px;" width="6" height="6" viewBox="0 0 6 6"><path d="M0 0h6L0 6z" fill="#0f7b24"/></svg>
<div style="left:235px;top:204px;width:68px;height:20px;overflow:hidden;font-family:'Liberation Sans', sans-serif"><div style="right:2px;transform-origin:100% 0;top:0px;text-align:right;white-space:pre;transform:scaleX(0.9);font-size:10px;line-height:12px;letter-spacing:0px;color:#000;">45,469,989</div></div>
<div style="left:370px;top:204px;width:1px;height:21px;background:#d4d4d4;"></div>
<svg style="left:304px;top:204px;" width="6" height="6" viewBox="0 0 6 6"><path d="M0 0h6L0 6z" fill="#0f7b24"/></svg>
<div style="left:304px;top:204px;width:66px;height:20px;overflow:hidden;font-family:'Liberation Sans', sans-serif"><div style="right:2px;transform-origin:100% 0;top:0px;text-align:right;white-space:pre;transform:scaleX(0.9);font-size:10px;line-height:12px;letter-spacing:0px;color:#000;">2,000,000</div></div>
<div style="left:395px;top:204px;width:1px;height:21px;background:#d4d4d4;"></div>
<svg style="left:371px;top:204px;" width="6" height="6" viewBox="0 0 6 6"><path d="M0 0h6L0 6z" fill="#0f7b24"/></svg>
<div style="left:371px;top:204px;width:24px;height:20px;overflow:hidden;font-family:'Liberation Sans', sans-serif"><div style="right:2px;transform-origin:100% 0;top:0px;text-align:right;white-space:pre;transform:scaleX(0.9);font-size:10px;line-height:12px;letter-spacing:0px;color:#000;">5</div></div>
<div style="left:448px;top:204px;width:1px;height:21px;background:#d4d4d4;"></div>
<svg style="left:396px;top:204px;" width="6" height="6" viewBox="0 0 6 6"><path d="M0 0h6L0 6z" fill="#0f7b24"/></svg>
<div style="left:396px;top:204px;width:52px;height:20px;overflow:hidden;font-family:'Liberation Sans', sans-serif"><div style="right:2px;transform-origin:100% 0;top:0px;text-align:right;white-space:pre;transform:scaleX(0.9);font-size:10px;line-height:12px;letter-spacing:0px;color:#000;">2,000,000</div></div>
<div style="left:486px;top:204px;width:1px;height:21px;background:#d4d4d4;"></div>
<div style="left:553px;top:204px;width:1px;height:21px;background:#d4d4d4;"></div>
<svg style="left:487px;top:204px;" width="6" height="6" viewBox="0 0 6 6"><path d="M0 0h6L0 6z" fill="#0f7b24"/></svg>
<div style="left:487px;top:204px;width:66px;height:20px;overflow:hidden;font-family:'Liberation Sans', sans-serif"><div style="right:2px;transform-origin:100% 0;top:0px;text-align:right;white-space:pre;transform:scaleX(0.9);font-size:10px;line-height:12px;letter-spacing:0px;color:#000;">0</div></div>
<div style="left:599px;top:204px;width:1px;height:21px;background:#d4d4d4;"></div>
<div style="left:654px;top:204px;width:1px;height:21px;background:#d4d4d4;"></div>
<svg style="left:600px;top:204px;" width="6" height="6" viewBox="0 0 6 6"><path d="M0 0h6L0 6z" fill="#0f7b24"/></svg>
<div style="left:600px;top:204px;width:54px;height:20px;overflow:hidden;font-family:'Liberation Sans', sans-serif"><div style="right:2px;transform-origin:100% 0;top:0px;text-align:right;white-space:pre;transform:scaleX(0.9);font-size:10px;line-height:12px;letter-spacing:0px;color:#000;">0</div></div>
<div style="left:709px;top:204px;width:1px;height:21px;background:#d4d4d4;"></div>
<svg style="left:655px;top:204px;" width="6" height="6" viewBox="0 0 6 6"><path d="M0 0h6L0 6z" fill="#0f7b24"/></svg>
<div style="left:655px;top:204px;width:54px;height:20px;overflow:hidden;font-family:'Liberation Sans', sans-serif"><div style="right:2px;transform-origin:100% 0;top:0px;text-align:right;white-space:pre;transform:scaleX(0.9);font-size:10px;line-height:12px;letter-spacing:0px;color:#000;">0</div></div>
<div style="left:769px;top:204px;width:1px;height:21px;background:#d4d4d4;"></div>
<svg style="left:710px;top:204px;" width="6" height="6" viewBox="0 0 6 6"><path d="M0 0h6L0 6z" fill="#0f7b24"/></svg>
<div style="left:710px;top:204px;width:59px;height:20px;overflow:hidden;font-family:'Liberation Sans', sans-serif"><div style="right:2px;transform-origin:100% 0;top:0px;text-align:right;white-space:pre;transform:scaleX(0.9);font-size:10px;line-height:12px;letter-spacing:0px;color:#000;">0</div></div>
<div style="left:824px;top:204px;width:1px;height:21px;background:#d4d4d4;"></div>
<svg style="left:770px;top:204px;" width="6" height="6" viewBox="0 0 6 6"><path d="M0 0h6L0 6z" fill="#0f7b24"/></svg>
<div style="left:770px;top:204px;width:54px;height:20px;overflow:hidden;font-family:'Liberation Sans', sans-serif"><div style="right:2px;transform-origin:100% 0;top:0px;text-align:right;white-space:pre;transform:scaleX(0.9);font-size:10px;line-height:12px;letter-spacing:0px;color:#000;">0</div></div>
<div style="left:889px;top:204px;width:1px;height:21px;background:#d4d4d4;"></div>
<svg style="left:825px;top:204px;" width="6" height="6" viewBox="0 0 6 6"><path d="M0 0h6L0 6z" fill="#0f7b24"/></svg>
<div style="left:825px;top:204px;width:64px;height:20px;overflow:hidden;font-family:'Liberation Sans', sans-serif"><div style="right:2px;transform-origin:100% 0;top:0px;text-align:right;white-space:pre;transform:scaleX(0.9);font-size:10px;line-height:12px;letter-spacing:0px;color:#000;">0</div></div>
<div style="left:948px;top:204px;width:1px;height:21px;background:#d4d4d4;"></div>
<svg style="left:890px;top:204px;" width="6" height="6" viewBox="0 0 6 6"><path d="M0 0h6L0 6z" fill="#0f7b24"/></svg>
<div style="left:890px;top:204px;width:58px;height:20px;overflow:hidden;font-family:'Liberation Sans', sans-serif"><div style="right:2px;transform-origin:100% 0;top:0px;text-align:right;white-space:pre;transform:scaleX(0.9);font-size:10px;line-height:12px;letter-spacing:0px;color:#000;">0</div></div>
<div style="left:1003px;top:204px;width:1px;height:21px;background:#d4d4d4;"></div>
<svg style="left:949px;top:204px;" width="6" height="6" viewBox="0 0 6 6"><path d="M0 0h6L0 6z" fill="#0f7b24"/></svg>
<div style="left:949px;top:204px;width:54px;height:20px;overflow:hidden;font-family:'Liberation Sans', sans-serif"><div style="right:2px;transform-origin:100% 0;top:0px;text-align:right;white-space:pre;transform:scaleX(0.9);font-size:10px;line-height:12px;letter-spacing:0px;color:#000;">43,469,989</div></div>
<div style="left:1058px;top:204px;width:1px;height:21px;background:#d4d4d4;"></div>
<svg style="left:1004px;top:204px;" width="6" height="6" viewBox="0 0 6 6"><path d="M0 0h6L0 6z" fill="#0f7b24"/></svg>
<div style="left:1004px;top:204px;width:54px;height:20px;overflow:hidden;font-family:'Liberation Sans', sans-serif"><div style="right:2px;transform-origin:100% 0;top:0px;text-align:right;white-space:pre;transform:scaleX(0.9);font-size:10px;line-height:12px;letter-spacing:0px;color:#000;">0</div></div>
<div style="left:2px;top:240px;width:39px;height:1px;background:#c3c3c3;"></div>
<div style="left:2px;top:225px;width:39px;height:15px;overflow:hidden;font-family:'Liberation Sans', sans-serif"><div style="left:0;top:-1px;width:100%;text-align:center;font-size:12.4px;line-height:16px;letter-spacing:0.25px;color:#212121">15113</div></div>
<div style="left:42px;top:225px;width:1237px;height:16px;background:#ffff00;"></div>
<div style="left:42px;top:225px;width:557px;height:15px;overflow:hidden;font-family:'Liberation Sans', sans-serif"><div style="left:3px;transform-origin:0 0;top:1px;text-align:left;white-space:pre;transform:scaleX(0.9264);font-size:10px;line-height:12px;letter-spacing:0px;color:#000;">No. Pembayaran : 50562803   Outlet : 6255049 - CV CAHAYA SURYA UTAMA</div></div>
<div style="left:2px;top:261px;width:39px;height:1px;background:#c3c3c3;"></div>
<div style="left:2px;top:241px;width:39px;height:20px;overflow:hidden;font-family:'Liberation Sans', sans-serif"><div style="left:0;top:4px;width:100%;text-align:center;font-size:12.4px;line-height:16px;letter-spacing:0.25px;color:#212121">15114</div></div>
<div style="left:42px;top:241px;width:1237px;height:21px;background:#ffff00;"></div>
<svg style="left:42px;top:241px;" width="6" height="6" viewBox="0 0 6 6"><path d="M0 0h6L0 6z" fill="#0f7b24"/></svg>
<div style="left:42px;top:241px;width:44px;height:20px;overflow:hidden;font-family:'Liberation Sans', sans-serif"><div style="left:3px;transform-origin:0 0;top:0px;text-align:left;white-space:pre;transform:scaleX(0.9);font-size:10px;line-height:12px;letter-spacing:0px;color:#000;">24-JUL-<br>25</div></div>
<svg style="left:135px;top:241px;" width="6" height="6" viewBox="0 0 6 6"><path d="M0 0h6L0 6z" fill="#0f7b24"/></svg>
<div style="left:135px;top:241px;width:49px;height:20px;overflow:hidden;font-family:'Liberation Sans', sans-serif"><div style="left:3px;transform-origin:0 0;top:0px;text-align:left;white-space:pre;transform:scaleX(0.9);font-size:10px;line-height:12px;letter-spacing:0px;color:#000;">36<i>1</i>08<i>1</i>20</div></div>
<svg style="left:185px;top:241px;" width="6" height="6" viewBox="0 0 6 6"><path d="M0 0h6L0 6z" fill="#0f7b24"/></svg>
<div style="left:185px;top:241px;width:49px;height:20px;overflow:hidden;font-family:'Liberation Sans', sans-serif"><div style="left:3px;transform-origin:0 0;top:0px;text-align:left;white-space:pre;transform:scaleX(0.9);font-size:10px;line-height:12px;letter-spacing:0px;color:#000;"><i>1</i>5-JUL-25</div></div>
<svg style="left:235px;top:241px;" width="6" height="6" viewBox="0 0 6 6"><path d="M0 0h6L0 6z" fill="#0f7b24"/></svg>
<div style="left:235px;top:241px;width:68px;height:20px;overflow:hidden;font-family:'Liberation Sans', sans-serif"><div style="right:2px;transform-origin:100% 0;top:0px;text-align:right;white-space:pre;transform:scaleX(0.9);font-size:10px;line-height:12px;letter-spacing:0px;color:#000;"><i>1</i>,006,03<i>1</i></div></div>
<svg style="left:304px;top:241px;" width="6" height="6" viewBox="0 0 6 6"><path d="M0 0h6L0 6z" fill="#0f7b24"/></svg>
<div style="left:304px;top:241px;width:66px;height:20px;overflow:hidden;font-family:'Liberation Sans', sans-serif"><div style="right:2px;transform-origin:100% 0;top:0px;text-align:right;white-space:pre;transform:scaleX(0.9);font-size:10px;line-height:12px;letter-spacing:0px;color:#000;">588,729</div></div>
<svg style="left:371px;top:241px;" width="6" height="6" viewBox="0 0 6 6"><path d="M0 0h6L0 6z" fill="#0f7b24"/></svg>
<div style="left:371px;top:241px;width:24px;height:20px;overflow:hidden;font-family:'Liberation Sans', sans-serif"><div style="right:2px;transform-origin:100% 0;top:0px;text-align:right;white-space:pre;transform:scaleX(0.9);font-size:10px;line-height:12px;letter-spacing:0px;color:#000;">2</div></div>
<svg style="left:396px;top:241px;" width="6" height="6" viewBox="0 0 6 6"><path d="M0 0h6L0 6z" fill="#0f7b24"/></svg>
<div style="left:396px;top:241px;width:52px;height:20px;overflow:hidden;font-family:'Liberation Sans', sans-serif"><div style="right:2px;transform-origin:100% 0;top:0px;text-align:right;white-space:pre;transform:scaleX(0.9);font-size:10px;line-height:12px;letter-spacing:0px;color:#000;">588,729</div></div>
<svg style="left:487px;top:241px;" width="6" height="6" viewBox="0 0 6 6"><path d="M0 0h6L0 6z" fill="#0f7b24"/></svg>
<div style="left:487px;top:241px;width:66px;height:20px;overflow:hidden;font-family:'Liberation Sans', sans-serif"><div style="right:2px;transform-origin:100% 0;top:0px;text-align:right;white-space:pre;transform:scaleX(0.9);font-size:10px;line-height:12px;letter-spacing:0px;color:#000;">0</div></div>
<svg style="left:600px;top:241px;" width="6" height="6" viewBox="0 0 6 6"><path d="M0 0h6L0 6z" fill="#0f7b24"/></svg>
<div style="left:600px;top:241px;width:54px;height:20px;overflow:hidden;font-family:'Liberation Sans', sans-serif"><div style="right:2px;transform-origin:100% 0;top:0px;text-align:right;white-space:pre;transform:scaleX(0.9);font-size:10px;line-height:12px;letter-spacing:0px;color:#000;">0</div></div>
<svg style="left:655px;top:241px;" width="6" height="6" viewBox="0 0 6 6"><path d="M0 0h6L0 6z" fill="#0f7b24"/></svg>
<div style="left:655px;top:241px;width:54px;height:20px;overflow:hidden;font-family:'Liberation Sans', sans-serif"><div style="right:2px;transform-origin:100% 0;top:0px;text-align:right;white-space:pre;transform:scaleX(0.9);font-size:10px;line-height:12px;letter-spacing:0px;color:#000;">0</div></div>
<svg style="left:710px;top:241px;" width="6" height="6" viewBox="0 0 6 6"><path d="M0 0h6L0 6z" fill="#0f7b24"/></svg>
<div style="left:710px;top:241px;width:59px;height:20px;overflow:hidden;font-family:'Liberation Sans', sans-serif"><div style="right:2px;transform-origin:100% 0;top:0px;text-align:right;white-space:pre;transform:scaleX(0.9);font-size:10px;line-height:12px;letter-spacing:0px;color:#000;">0</div></div>
<svg style="left:770px;top:241px;" width="6" height="6" viewBox="0 0 6 6"><path d="M0 0h6L0 6z" fill="#0f7b24"/></svg>
<div style="left:770px;top:241px;width:54px;height:20px;overflow:hidden;font-family:'Liberation Sans', sans-serif"><div style="right:2px;transform-origin:100% 0;top:0px;text-align:right;white-space:pre;transform:scaleX(0.9);font-size:10px;line-height:12px;letter-spacing:0px;color:#000;">0</div></div>
<svg style="left:825px;top:241px;" width="6" height="6" viewBox="0 0 6 6"><path d="M0 0h6L0 6z" fill="#0f7b24"/></svg>
<div style="left:825px;top:241px;width:64px;height:20px;overflow:hidden;font-family:'Liberation Sans', sans-serif"><div style="right:2px;transform-origin:100% 0;top:0px;text-align:right;white-space:pre;transform:scaleX(0.9);font-size:10px;line-height:12px;letter-spacing:0px;color:#000;">0</div></div>
<svg style="left:890px;top:241px;" width="6" height="6" viewBox="0 0 6 6"><path d="M0 0h6L0 6z" fill="#0f7b24"/></svg>
<div style="left:890px;top:241px;width:58px;height:20px;overflow:hidden;font-family:'Liberation Sans', sans-serif"><div style="right:2px;transform-origin:100% 0;top:0px;text-align:right;white-space:pre;transform:scaleX(0.9);font-size:10px;line-height:12px;letter-spacing:0px;color:#000;">0</div></div>
<svg style="left:949px;top:241px;" width="6" height="6" viewBox="0 0 6 6"><path d="M0 0h6L0 6z" fill="#0f7b24"/></svg>
<div style="left:949px;top:241px;width:54px;height:20px;overflow:hidden;font-family:'Liberation Sans', sans-serif"><div style="right:2px;transform-origin:100% 0;top:0px;text-align:right;white-space:pre;transform:scaleX(0.9);font-size:10px;line-height:12px;letter-spacing:0px;color:#000;">4<i>1</i>7,302</div></div>
<svg style="left:1004px;top:241px;" width="6" height="6" viewBox="0 0 6 6"><path d="M0 0h6L0 6z" fill="#0f7b24"/></svg>
<div style="left:1004px;top:241px;width:54px;height:20px;overflow:hidden;font-family:'Liberation Sans', sans-serif"><div style="right:2px;transform-origin:100% 0;top:0px;text-align:right;white-space:pre;transform:scaleX(0.9);font-size:10px;line-height:12px;letter-spacing:0px;color:#000;">0</div></div>
<div style="left:2px;top:277px;width:39px;height:1px;background:#c3c3c3;"></div>
<div style="left:2px;top:262px;width:39px;height:15px;overflow:hidden;font-family:'Liberation Sans', sans-serif"><div style="left:0;top:-1px;width:100%;text-align:center;font-size:12.4px;line-height:16px;letter-spacing:0.25px;color:#212121">15115</div></div>
<div style="left:42px;top:277px;width:1237px;height:1px;background:#d4d4d4;"></div>
<div style="left:599px;top:262px;width:1px;height:16px;background:#d4d4d4;"></div>
<div style="left:42px;top:262px;width:557px;height:15px;overflow:hidden;font-family:'Liberation Sans', sans-serif"><div style="left:3px;transform-origin:0 0;top:1px;text-align:left;white-space:pre;transform:scaleX(0.9051);font-size:10px;line-height:12px;letter-spacing:0px;color:#000;">No. Pembayaran : 50562804   Outlet : 200<i>1</i>2<i>1</i><i>1</i> - GAMBIA</div></div>
<div style="left:654px;top:262px;width:1px;height:16px;background:#d4d4d4;"></div>
<div style="left:709px;top:262px;width:1px;height:16px;background:#d4d4d4;"></div>
<div style="left:744px;top:262px;width:1px;height:16px;background:#d4d4d4;"></div>
<div style="left:769px;top:262px;width:1px;height:16px;background:#d4d4d4;"></div>
<div style="left:824px;top:262px;width:1px;height:16px;background:#d4d4d4;"></div>
<div style="left:857px;top:262px;width:1px;height:16px;background:#d4d4d4;"></div>
<div style="left:874px;top:262px;width:1px;height:16px;background:#d4d4d4;"></div>
<div style="left:889px;top:262px;width:1px;height:16px;background:#d4d4d4;"></div>
<div style="left:908px;top:262px;width:1px;height:16px;background:#d4d4d4;"></div>
<div style="left:948px;top:262px;width:1px;height:16px;background:#d4d4d4;"></div>
<div style="left:1003px;top:262px;width:1px;height:16px;background:#d4d4d4;"></div>
<div style="left:1058px;top:262px;width:1px;height:16px;background:#d4d4d4;"></div>
<div style="left:1076px;top:262px;width:1px;height:16px;background:#d4d4d4;"></div>
<div style="left:1101px;top:262px;width:1px;height:16px;background:#d4d4d4;"></div>
<div style="left:1139px;top:262px;width:1px;height:16px;background:#d4d4d4;"></div>
<div style="left:1162px;top:262px;width:1px;height:16px;background:#d4d4d4;"></div>
<div style="left:2px;top:298px;width:39px;height:1px;background:#c3c3c3;"></div>
<div style="left:2px;top:278px;width:39px;height:20px;overflow:hidden;font-family:'Liberation Sans', sans-serif"><div style="left:0;top:4px;width:100%;text-align:center;font-size:12.4px;line-height:16px;letter-spacing:0.25px;color:#212121">15116</div></div>
<div style="left:42px;top:298px;width:1237px;height:1px;background:#d4d4d4;"></div>
<div style="left:86px;top:278px;width:1px;height:21px;background:#d4d4d4;"></div>
<svg style="left:42px;top:278px;" width="6" height="6" viewBox="0 0 6 6"><path d="M0 0h6L0 6z" fill="#0f7b24"/></svg>
<div style="left:42px;top:278px;width:44px;height:20px;overflow:hidden;font-family:'Liberation Sans', sans-serif"><div style="left:3px;transform-origin:0 0;top:0px;text-align:left;white-space:pre;transform:scaleX(0.9);font-size:10px;line-height:12px;letter-spacing:0px;color:#000;">24-JUL-<br>25</div></div>
<div style="left:134px;top:278px;width:1px;height:21px;background:#d4d4d4;"></div>
<div style="left:184px;top:278px;width:1px;height:21px;background:#d4d4d4;"></div>
<svg style="left:135px;top:278px;" width="6" height="6" viewBox="0 0 6 6"><path d="M0 0h6L0 6z" fill="#0f7b24"/></svg>
<div style="left:135px;top:278px;width:49px;height:20px;overflow:hidden;font-family:'Liberation Sans', sans-serif"><div style="left:3px;transform-origin:0 0;top:0px;text-align:left;white-space:pre;transform:scaleX(0.9);font-size:10px;line-height:12px;letter-spacing:0px;color:#000;">36<i>1</i>08432</div></div>
<div style="left:234px;top:278px;width:1px;height:21px;background:#d4d4d4;"></div>
<svg style="left:185px;top:278px;" width="6" height="6" viewBox="0 0 6 6"><path d="M0 0h6L0 6z" fill="#0f7b24"/></svg>
<div style="left:185px;top:278px;width:49px;height:20px;overflow:hidden;font-family:'Liberation Sans', sans-serif"><div style="left:3px;transform-origin:0 0;top:0px;text-align:left;white-space:pre;transform:scaleX(0.9);font-size:10px;line-height:12px;letter-spacing:0px;color:#000;"><i>1</i>7-JUL-25</div></div>
<div style="left:303px;top:278px;width:1px;height:21px;background:#d4d4d4;"></div>
<svg style="left:235px;top:278px;" width="6" height="6" viewBox="0 0 6 6"><path d="M0 0h6L0 6z" fill="#0f7b24"/></svg>
<div style="left:235px;top:278px;width:68px;height:20px;overflow:hidden;font-family:'Liberation Sans', sans-serif"><div style="right:2px;transform-origin:100% 0;top:0px;text-align:right;white-space:pre;transform:scaleX(0.9);font-size:10px;line-height:12px;letter-spacing:0px;color:#000;">834,700</div></div>
<div style="left:370px;top:278px;width:1px;height:21px;background:#d4d4d4;"></div>
<svg style="left:304px;top:278px;" width="6" height="6" viewBox="0 0 6 6"><path d="M0 0h6L0 6z" fill="#0f7b24"/></svg>
<div style="left:304px;top:278px;width:66px;height:20px;overflow:hidden;font-family:'Liberation Sans', sans-serif"><div style="right:2px;transform-origin:100% 0;top:0px;text-align:right;white-space:pre;transform:scaleX(0.9);font-size:10px;line-height:12px;letter-spacing:0px;color:#000;">834,700</div></div>
<div style="left:395px;top:278px;width:1px;height:21px;background:#d4d4d4;"></div>
<svg style="left:371px;top:278px;" width="6" height="6" viewBox="0 0 6 6"><path d="M0 0h6L0 6z" fill="#0f7b24"/></svg>
<div style="left:371px;top:278px;width:24px;height:20px;overflow:hidden;font-family:'Liberation Sans', sans-serif"><div style="right:2px;transform-origin:100% 0;top:0px;text-align:right;white-space:pre;transform:scaleX(0.9);font-size:10px;line-height:12px;letter-spacing:0px;color:#000;">0</div></div>
<div style="left:448px;top:278px;width:1px;height:21px;background:#d4d4d4;"></div>
<svg style="left:396px;top:278px;" width="6" height="6" viewBox="0 0 6 6"><path d="M0 0h6L0 6z" fill="#0f7b24"/></svg>
<div style="left:396px;top:278px;width:52px;height:20px;overflow:hidden;font-family:'Liberation Sans', sans-serif"><div style="right:2px;transform-origin:100% 0;top:0px;text-align:right;white-space:pre;transform:scaleX(0.9);font-size:10px;line-height:12px;letter-spacing:0px;color:#000;">834,700</div></div>
<div style="left:486px;top:278px;width:1px;height:21px;background:#d4d4d4;"></div>
<div style="left:553px;top:278px;width:1px;height:21px;background:#d4d4d4;"></div>
<svg style="left:487px;top:278px;" width="6" height="6" viewBox="0 0 6 6"><path d="M0 0h6L0 6z" fill="#0f7b24"/></svg>
<div style="left:487px;top:278px;width:66px;height:20px;overflow:hidden;font-family:'Liberation Sans', sans-serif"><div style="right:2px;transform-origin:100% 0;top:0px;text-align:right;white-space:pre;transform:scaleX(0.9);font-size:10px;line-height:12px;letter-spacing:0px;color:#000;">0</div></div>
<div style="left:599px;top:278px;width:1px;height:21px;background:#d4d4d4;"></div>
<div style="left:654px;top:278px;width:1px;height:21px;background:#d4d4d4;"></div>
<svg style="left:600px;top:278px;" width="6" height="6" viewBox="0 0 6 6"><path d="M0 0h6L0 6z" fill="#0f7b24"/></svg>
<div style="left:600px;top:278px;width:54px;height:20px;overflow:hidden;font-family:'Liberation Sans', sans-serif"><div style="right:2px;transform-origin:100% 0;top:0px;text-align:right;white-space:pre;transform:scaleX(0.9);font-size:10px;line-height:12px;letter-spacing:0px;color:#000;">0</div></div>
<div style="left:709px;top:278px;width:1px;height:21px;background:#d4d4d4;"></div>
<svg style="left:655px;top:278px;" width="6" height="6" viewBox="0 0 6 6"><path d="M0 0h6L0 6z" fill="#0f7b24"/></svg>
<div style="left:655px;top:278px;width:54px;height:20px;overflow:hidden;font-family:'Liberation Sans', sans-serif"><div style="right:2px;transform-origin:100% 0;top:0px;text-align:right;white-space:pre;transform:scaleX(0.9);font-size:10px;line-height:12px;letter-spacing:0px;color:#000;">0</div></div>
<div style="left:769px;top:278px;width:1px;height:21px;background:#d4d4d4;"></div>
<svg style="left:710px;top:278px;" width="6" height="6" viewBox="0 0 6 6"><path d="M0 0h6L0 6z" fill="#0f7b24"/></svg>
<div style="left:710px;top:278px;width:59px;height:20px;overflow:hidden;font-family:'Liberation Sans', sans-serif"><div style="right:2px;transform-origin:100% 0;top:0px;text-align:right;white-space:pre;transform:scaleX(0.9);font-size:10px;line-height:12px;letter-spacing:0px;color:#000;">0</div></div>
<div style="left:824px;top:278px;width:1px;height:21px;background:#d4d4d4;"></div>
<svg style="left:770px;top:278px;" width="6" height="6" viewBox="0 0 6 6"><path d="M0 0h6L0 6z" fill="#0f7b24"/></svg>
<div style="left:770px;top:278px;width:54px;height:20px;overflow:hidden;font-family:'Liberation Sans', sans-serif"><div style="right:2px;transform-origin:100% 0;top:0px;text-align:right;white-space:pre;transform:scaleX(0.9);font-size:10px;line-height:12px;letter-spacing:0px;color:#000;">0</div></div>
<div style="left:889px;top:278px;width:1px;height:21px;background:#d4d4d4;"></div>
<svg style="left:825px;top:278px;" width="6" height="6" viewBox="0 0 6 6"><path d="M0 0h6L0 6z" fill="#0f7b24"/></svg>
<div style="left:825px;top:278px;width:64px;height:20px;overflow:hidden;font-family:'Liberation Sans', sans-serif"><div style="right:2px;transform-origin:100% 0;top:0px;text-align:right;white-space:pre;transform:scaleX(0.9);font-size:10px;line-height:12px;letter-spacing:0px;color:#000;">0</div></div>
<div style="left:948px;top:278px;width:1px;height:21px;background:#d4d4d4;"></div>
<svg style="left:890px;top:278px;" width="6" height="6" viewBox="0 0 6 6"><path d="M0 0h6L0 6z" fill="#0f7b24"/></svg>
<div style="left:890px;top:278px;width:58px;height:20px;overflow:hidden;font-family:'Liberation Sans', sans-serif"><div style="right:2px;transform-origin:100% 0;top:0px;text-align:right;white-space:pre;transform:scaleX(0.9);font-size:10px;line-height:12px;letter-spacing:0px;color:#000;">0</div></div>
<div style="left:1003px;top:278px;width:1px;height:21px;background:#d4d4d4;"></div>
<svg style="left:949px;top:278px;" width="6" height="6" viewBox="0 0 6 6"><path d="M0 0h6L0 6z" fill="#0f7b24"/></svg>
<div style="left:949px;top:278px;width:54px;height:20px;overflow:hidden;font-family:'Liberation Sans', sans-serif"><div style="right:2px;transform-origin:100% 0;top:0px;text-align:right;white-space:pre;transform:scaleX(0.9);font-size:10px;line-height:12px;letter-spacing:0px;color:#000;">0</div></div>
<div style="left:1058px;top:278px;width:1px;height:21px;background:#d4d4d4;"></div>
<svg style="left:1004px;top:278px;" width="6" height="6" viewBox="0 0 6 6"><path d="M0 0h6L0 6z" fill="#0f7b24"/></svg>
<div style="left:1004px;top:278px;width:54px;height:20px;overflow:hidden;font-family:'Liberation Sans', sans-serif"><div style="right:2px;transform-origin:100% 0;top:0px;text-align:right;white-space:pre;transform:scaleX(0.9);font-size:10px;line-height:12px;letter-spacing:0px;color:#000;">0</div></div>
<div style="left:2px;top:314px;width:39px;height:1px;background:#c3c3c3;"></div>
<div style="left:2px;top:299px;width:39px;height:15px;overflow:hidden;font-family:'Liberation Sans', sans-serif"><div style="left:0;top:-1px;width:100%;text-align:center;font-size:12.4px;line-height:16px;letter-spacing:0.25px;color:#212121">15117</div></div>
<div style="left:42px;top:314px;width:1237px;height:1px;background:#d4d4d4;"></div>
<div style="left:599px;top:299px;width:1px;height:16px;background:#d4d4d4;"></div>
<div style="left:42px;top:299px;width:557px;height:15px;overflow:hidden;font-family:'Liberation Sans', sans-serif"><div style="left:3px;transform-origin:0 0;top:1px;text-align:left;white-space:pre;transform:scaleX(0.9079);font-size:10px;line-height:12px;letter-spacing:0px;color:#000;">No. Pembayaran : 50562805   Outlet : 6257489 - CASH RETAIL MUH 03</div></div>
<div style="left:654px;top:299px;width:1px;height:16px;background:#d4d4d4;"></div>
<div style="left:709px;top:299px;width:1px;height:16px;background:#d4d4d4;"></div>
<div style="left:744px;top:299px;width:1px;height:16px;background:#d4d4d4;"></div>
<div style="left:769px;top:299px;width:1px;height:16px;background:#d4d4d4;"></div>
<div style="left:824px;top:299px;width:1px;height:16px;background:#d4d4d4;"></div>
<div style="left:857px;top:299px;width:1px;height:16px;background:#d4d4d4;"></div>
<div style="left:874px;top:299px;width:1px;height:16px;background:#d4d4d4;"></div>
<div style="left:889px;top:299px;width:1px;height:16px;background:#d4d4d4;"></div>
<div style="left:908px;top:299px;width:1px;height:16px;background:#d4d4d4;"></div>
<div style="left:948px;top:299px;width:1px;height:16px;background:#d4d4d4;"></div>
<div style="left:1003px;top:299px;width:1px;height:16px;background:#d4d4d4;"></div>
<div style="left:1058px;top:299px;width:1px;height:16px;background:#d4d4d4;"></div>
<div style="left:1076px;top:299px;width:1px;height:16px;background:#d4d4d4;"></div>
<div style="left:1101px;top:299px;width:1px;height:16px;background:#d4d4d4;"></div>
<div style="left:1139px;top:299px;width:1px;height:16px;background:#d4d4d4;"></div>
<div style="left:1162px;top:299px;width:1px;height:16px;background:#d4d4d4;"></div>
<div style="left:2px;top:315px;width:39px;height:14px;overflow:hidden;font-family:'Liberation Sans', sans-serif"><div style="left:0;top:4px;width:100%;text-align:center;font-size:12.4px;line-height:16px;letter-spacing:0.25px;color:#212121">15118</div></div>
<div style="left:86px;top:315px;width:1px;height:14px;background:#d4d4d4;"></div>
<svg style="left:42px;top:315px;" width="6" height="6" viewBox="0 0 6 6"><path d="M0 0h6L0 6z" fill="#0f7b24"/></svg>
<div style="left:42px;top:315px;width:44px;height:12px;overflow:hidden;font-family:'Liberation Sans', sans-serif"><div style="left:3px;transform-origin:0 0;top:0px;text-align:left;white-space:pre;transform:scaleX(0.9);font-size:10px;line-height:12px;letter-spacing:0px;color:#000;">24-JUL-<br>25</div></div>
<div style="left:134px;top:315px;width:1px;height:14px;background:#d4d4d4;"></div>
<div style="left:184px;top:315px;width:1px;height:14px;background:#d4d4d4;"></div>
<svg style="left:135px;top:315px;" width="6" height="6" viewBox="0 0 6 6"><path d="M0 0h6L0 6z" fill="#0f7b24"/></svg>
<div style="left:135px;top:315px;width:49px;height:12px;overflow:hidden;font-family:'Liberation Sans', sans-serif"><div style="left:3px;transform-origin:0 0;top:0px;text-align:left;white-space:pre;transform:scaleX(0.9);font-size:10px;line-height:12px;letter-spacing:0px;color:#000;">7<i>1</i>000338</div></div>
<div style="left:234px;top:315px;width:1px;height:14px;background:#d4d4d4;"></div>
<svg style="left:185px;top:315px;" width="6" height="6" viewBox="0 0 6 6"><path d="M0 0h6L0 6z" fill="#0f7b24"/></svg>
<div style="left:185px;top:315px;width:49px;height:12px;overflow:hidden;font-family:'Liberation Sans', sans-serif"><div style="left:3px;transform-origin:0 0;top:0px;text-align:left;white-space:pre;transform:scaleX(0.9);font-size:10px;line-height:12px;letter-spacing:0px;color:#000;">24-JUL-25</div></div>
<div style="left:303px;top:315px;width:1px;height:14px;background:#d4d4d4;"></div>
<svg style="left:235px;top:315px;" width="6" height="6" viewBox="0 0 6 6"><path d="M0 0h6L0 6z" fill="#0f7b24"/></svg>
<div style="left:235px;top:315px;width:68px;height:12px;overflow:hidden;font-family:'Liberation Sans', sans-serif"><div style="right:2px;transform-origin:100% 0;top:0px;text-align:right;white-space:pre;transform:scaleX(0.9);font-size:10px;line-height:12px;letter-spacing:0px;color:#000;">3<i>1</i>5,000</div></div>
<div style="left:370px;top:315px;width:1px;height:14px;background:#d4d4d4;"></div>
<svg style="left:304px;top:315px;" width="6" height="6" viewBox="0 0 6 6"><path d="M0 0h6L0 6z" fill="#0f7b24"/></svg>
<div style="left:304px;top:315px;width:66px;height:12px;overflow:hidden;font-family:'Liberation Sans', sans-serif"><div style="right:2px;transform-origin:100% 0;top:0px;text-align:right;white-space:pre;transform:scaleX(0.9);font-size:10px;line-height:12px;letter-spacing:0px;color:#000;">305,000</div></div>
<div style="left:395px;top:315px;width:1px;height:14px;background:#d4d4d4;"></div>
<svg style="left:371px;top:315px;" width="6" height="6" viewBox="0 0 6 6"><path d="M0 0h6L0 6z" fill="#0f7b24"/></svg>
<div style="left:371px;top:315px;width:24px;height:12px;overflow:hidden;font-family:'Liberation Sans', sans-serif"><div style="right:2px;transform-origin:100% 0;top:0px;text-align:right;white-space:pre;transform:scaleX(0.9);font-size:10px;line-height:12px;letter-spacing:0px;color:#000;">-<i>1</i>4</div></div>
<div style="left:448px;top:315px;width:1px;height:14px;background:#d4d4d4;"></div>
<svg style="left:396px;top:315px;" width="6" height="6" viewBox="0 0 6 6"><path d="M0 0h6L0 6z" fill="#0f7b24"/></svg>
<div style="left:396px;top:315px;width:52px;height:12px;overflow:hidden;font-family:'Liberation Sans', sans-serif"><div style="right:2px;transform-origin:100% 0;top:0px;text-align:right;white-space:pre;transform:scaleX(0.9);font-size:10px;line-height:12px;letter-spacing:0px;color:#000;">305,000</div></div>
<div style="left:486px;top:315px;width:1px;height:14px;background:#d4d4d4;"></div>
<div style="left:553px;top:315px;width:1px;height:14px;background:#d4d4d4;"></div>
<svg style="left:487px;top:315px;" width="6" height="6" viewBox="0 0 6 6"><path d="M0 0h6L0 6z" fill="#0f7b24"/></svg>
<div style="left:487px;top:315px;width:66px;height:12px;overflow:hidden;font-family:'Liberation Sans', sans-serif"><div style="right:2px;transform-origin:100% 0;top:0px;text-align:right;white-space:pre;transform:scaleX(0.9);font-size:10px;line-height:12px;letter-spacing:0px;color:#000;">0</div></div>
<div style="left:599px;top:315px;width:1px;height:14px;background:#d4d4d4;"></div>
<div style="left:654px;top:315px;width:1px;height:14px;background:#d4d4d4;"></div>
<svg style="left:600px;top:315px;" width="6" height="6" viewBox="0 0 6 6"><path d="M0 0h6L0 6z" fill="#0f7b24"/></svg>
<div style="left:600px;top:315px;width:54px;height:12px;overflow:hidden;font-family:'Liberation Sans', sans-serif"><div style="right:2px;transform-origin:100% 0;top:0px;text-align:right;white-space:pre;transform:scaleX(0.9);font-size:10px;line-height:12px;letter-spacing:0px;color:#000;">0</div></div>
<div style="left:709px;top:315px;width:1px;height:14px;background:#d4d4d4;"></div>
<svg style="left:655px;top:315px;" width="6" height="6" viewBox="0 0 6 6"><path d="M0 0h6L0 6z" fill="#0f7b24"/></svg>
<div style="left:655px;top:315px;width:54px;height:12px;overflow:hidden;font-family:'Liberation Sans', sans-serif"><div style="right:2px;transform-origin:100% 0;top:0px;text-align:right;white-space:pre;transform:scaleX(0.9);font-size:10px;line-height:12px;letter-spacing:0px;color:#000;">0</div></div>
<div style="left:769px;top:315px;width:1px;height:14px;background:#d4d4d4;"></div>
<svg style="left:710px;top:315px;" width="6" height="6" viewBox="0 0 6 6"><path d="M0 0h6L0 6z" fill="#0f7b24"/></svg>
<div style="left:710px;top:315px;width:59px;height:12px;overflow:hidden;font-family:'Liberation Sans', sans-serif"><div style="right:2px;transform-origin:100% 0;top:0px;text-align:right;white-space:pre;transform:scaleX(0.9);font-size:10px;line-height:12px;letter-spacing:0px;color:#000;">0</div></div>
<div style="left:824px;top:315px;width:1px;height:14px;background:#d4d4d4;"></div>
<svg style="left:770px;top:315px;" width="6" height="6" viewBox="0 0 6 6"><path d="M0 0h6L0 6z" fill="#0f7b24"/></svg>
<div style="left:770px;top:315px;width:54px;height:12px;overflow:hidden;font-family:'Liberation Sans', sans-serif"><div style="right:2px;transform-origin:100% 0;top:0px;text-align:right;white-space:pre;transform:scaleX(0.9);font-size:10px;line-height:12px;letter-spacing:0px;color:#000;">0</div></div>
<div style="left:889px;top:315px;width:1px;height:14px;background:#d4d4d4;"></div>
<svg style="left:825px;top:315px;" width="6" height="6" viewBox="0 0 6 6"><path d="M0 0h6L0 6z" fill="#0f7b24"/></svg>
<div style="left:825px;top:315px;width:64px;height:12px;overflow:hidden;font-family:'Liberation Sans', sans-serif"><div style="right:2px;transform-origin:100% 0;top:0px;text-align:right;white-space:pre;transform:scaleX(0.9);font-size:10px;line-height:12px;letter-spacing:0px;color:#000;">0</div></div>
<div style="left:948px;top:315px;width:1px;height:14px;background:#d4d4d4;"></div>
<svg style="left:890px;top:315px;" width="6" height="6" viewBox="0 0 6 6"><path d="M0 0h6L0 6z" fill="#0f7b24"/></svg>
<div style="left:890px;top:315px;width:58px;height:12px;overflow:hidden;font-family:'Liberation Sans', sans-serif"><div style="right:2px;transform-origin:100% 0;top:0px;text-align:right;white-space:pre;transform:scaleX(0.9);font-size:10px;line-height:12px;letter-spacing:0px;color:#000;">0</div></div>
<div style="left:1003px;top:315px;width:1px;height:14px;background:#d4d4d4;"></div>
<svg style="left:949px;top:315px;" width="6" height="6" viewBox="0 0 6 6"><path d="M0 0h6L0 6z" fill="#0f7b24"/></svg>
<div style="left:949px;top:315px;width:54px;height:12px;overflow:hidden;font-family:'Liberation Sans', sans-serif"><div style="right:2px;transform-origin:100% 0;top:0px;text-align:right;white-space:pre;transform:scaleX(0.9);font-size:10px;line-height:12px;letter-spacing:0px;color:#000;"><i>1</i>0,000</div></div>
<div style="left:1058px;top:315px;width:1px;height:14px;background:#d4d4d4;"></div>
<svg style="left:1004px;top:315px;" width="6" height="6" viewBox="0 0 6 6"><path d="M0 0h6L0 6z" fill="#0f7b24"/></svg>
<div style="left:1004px;top:315px;width:54px;height:12px;overflow:hidden;font-family:'Liberation Sans', sans-serif"><div style="right:2px;transform-origin:100% 0;top:0px;text-align:right;white-space:pre;transform:scaleX(0.9);font-size:10px;line-height:12px;letter-spacing:0px;color:#000;">0</div></div>
<div style="left:2px;top:329px;width:1278px;height:1px;background:#a6a6a6;"></div>
<div style="left:1283px;top:113px;width:15px;height:216px;background:#dcdcdc;"></div>
<div style="left:1283px;top:115px;width:15px;height:15px;background:#fff;border:1px solid #ababab;box-sizing:border-box;"></div>
<svg style="left:1287px;top:120px;" width="8" height="5" viewBox="0 0 8 5"><path d="M0 4.2h7l-3.5-3.7z" fill="#777"/></svg>
<div style="left:1283px;top:314px;width:15px;height:15px;background:#fff;border:1px solid #ababab;box-sizing:border-box;"></div>
<svg style="left:1287px;top:319px;" width="8" height="5" viewBox="0 0 8 5"><path d="M0 0.5h7l-3.5 3.7z" fill="#777"/></svg>
<div style="left:1283px;top:215px;width:15px;height:16px;background:#fff;border:1px solid #ababab;box-sizing:border-box;"></div>
<div style="left:2px;top:329px;width:1278px;height:1px;background:#a6a6a6;"></div>
<div style="left:102px;top:329px;width:66px;height:24px;background:#fff;"></div>
<div style="left:102px;top:329px;width:1px;height:22px;background:#c6c6c6;"></div>
<div style="left:167px;top:329px;width:1px;height:22px;background:#c6c6c6;"></div>
<div style="left:102px;top:352px;width:66px;height:2px;background:#217346;"></div>
<div style="left:114px;top:335px;font-size:13px;color:#1e7145;font-weight:bold;letter-spacing:-0.357px;white-space:pre;line-height:16px;font-family:'Liberation Sans', sans-serif;">Sheet1</div>
<div style="left:180.3px;top:335px;font-size:13px;color:#444;font-weight:normal;letter-spacing:-0.501px;white-space:pre;line-height:16px;font-family:'Liberation Sans', sans-serif;">Sheet2</div>
<div style="left:232px;top:334px;width:1px;height:19px;background:#b0b0b0;"></div>
<div style="left:245.4px;top:335px;font-size:13px;color:#444;font-weight:normal;letter-spacing:-0.501px;white-space:pre;line-height:16px;font-family:'Liberation Sans', sans-serif;">Sheet3</div>
<div style="left:296px;top:334px;width:1px;height:19px;background:#b0b0b0;"></div>
<svg style="left:329px;top:334px;" width="18" height="18" viewBox="0 0 18 18"><circle cx="9" cy="9" r="7.6" fill="none" stroke="#6a6a6a" stroke-width="1.1"/><path d="M9 5v8M5 9h8" stroke="#6a6a6a" stroke-width="1.3"/></svg>
<svg style="left:27px;top:338px;" width="6" height="9" viewBox="0 0 6 9"><path d="M5.4 0.4v8L0.6 4.4z" fill="#c2c2c2"/></svg>
<svg style="left:57px;top:338px;" width="6" height="9" viewBox="0 0 6 9"><path d="M0.6 0.4v8L5.4 4.4z" fill="#c2c2c2"/></svg>
<div style="left:781px;top:338px;width:2px;height:2px;background:#a8a8a8;"></div>
<div style="left:781px;top:342px;width:2px;height:2px;background:#a8a8a8;"></div>
<div style="left:781px;top:346px;width:2px;height:2px;background:#a8a8a8;"></div>
<div style="left:798px;top:336px;width:479px;height:15px;background:#dcdcdc;"></div>
<div style="left:798px;top:336px;width:15px;height:15px;background:#fff;border:1px solid #ababab;box-sizing:border-box;"></div>
<svg style="left:803px;top:339px;" width="5" height="9" viewBox="0 0 5 9"><path d="M4.6 0.3v8.4L0.4 4.5z" fill="#666"/></svg>
<div style="left:1262px;top:336px;width:15px;height:15px;background:#fff;border:1px solid #ababab;box-sizing:border-box;"></div>
<svg style="left:1267px;top:339px;" width="5" height="9" viewBox="0 0 5 9"><path d="M0.4 0.3v8.4L4.6 4.5z" fill="#666"/></svg>
<div style="left:812px;top:336px;width:425px;height:15px;background:#fff;border:1px solid #ababab;box-sizing:border-box;"></div>
<div style="left:2px;top:357px;width:1299px;height:22px;background:#f3f3f3;"></div>
<div style="left:2px;top:357px;width:1299px;height:1px;background:#d0d0d0;"></div>
<div style="left:990px;top:358px;width:40px;height:21px;background:#c8c8c8;"></div>
<svg style="left:1003px;top:361px;" width="13" height="13" viewBox="0 0 13 13"><path d="M0.5 0.5h12v12h-12z M0.5 4.5h12 M0.5 8.5h12 M4.5 0.5v12 M8.5 0.5v12" fill="none" stroke="#666" stroke-width="1"/></svg>
<svg style="left:1043px;top:361px;" width="14" height="13" viewBox="0 0 14 13"><path d="M0.5 0.5h13v12h-13z" fill="none" stroke="#666" stroke-width="1"/><path d="M3.5 2.5h7v8h-7z M5 4.5h4 M5 6.5h4 M5 8.5h4" fill="none" stroke="#666" stroke-width="1"/></svg>
<svg style="left:1083px;top:361px;" width="14" height="13" viewBox="0 0 14 13"><path d="M0.5 0.5h13v12h-13z M4.5 0.5v7 M8.5 0.5v7 M0.5 7.5h8" fill="none" stroke="#666" stroke-width="1"/></svg>
<div style="left:1116px;top:367px;width:8px;height:1px;background:#555;"></div>
<div style="left:1129px;top:368px;width:100px;height:1px;background:#9a9a9a;"></div>
<div style="left:1177px;top:362px;width:5px;height:11px;background:#767676;"></div>
<div style="left:1233px;top:368px;width:9px;height:1px;background:#555;"></div>
<div style="left:1237px;top:364px;width:1px;height:9px;background:#555;"></div>
<div style="left:1255.8px;top:360px;font-size:11.5px;color:#444;font-weight:normal;letter-spacing:-0.955px;white-space:pre;line-height:14px;font-family:'Liberation Sans', sans-serif;">100%</div>
<div style="left:5px;top:369px;width:1297px;height:371px;box-shadow:0 2px 9px 0px rgba(0,0,15,0.6);"></div>
<div style="left:5px;top:369px;width:1297px;height:371px;background:#e6e6e6;border:1px solid #1a5c38;box-sizing:border-box;"></div>
<div style="left:6px;top:369px;width:1295px;height:65px;background:#217346;"></div>
<div style="left:5px;top:369px;width:1px;height:371px;background:#1a5c38;"></div>
<div style="left:1301px;top:369px;width:1px;height:371px;background:#1a5c38;"></div>
<svg style="left:28px;top:380px;" width="14" height="14" viewBox="0 0 14 14"><rect x="0" y="0" width="14" height="14" rx="0.8" fill="#fff"/><rect x="1.9" y="1.5" width="10.2" height="4.9" fill="#217346"/><rect x="2.9" y="9" width="8.4" height="3.5" fill="#217346"/><rect x="4.6" y="10.7" width="2.6" height="1.9" fill="#fff"/></svg>
<svg style="left:56px;top:379px;" width="16" height="16" viewBox="0 0 16 16"><path d="M7.6 1.8 L2.4 5.7 L7.8 9.3 M3 5.6 H8.6 C11.6 5.6 13.6 7.4 13.6 9.6 C13.6 11.8 12 13.2 9.8 13.6" fill="none" stroke="#fff" stroke-width="2" stroke-linecap="butt" stroke-linejoin="miter"/></svg>
<svg style="left:76px;top:385px;" width="6" height="4" viewBox="0 0 6 4"><path d="M0 0h5.4l-2.7 3.2z" fill="#fff"/></svg>
<svg style="left:91px;top:379px;" width="16" height="16" viewBox="0 0 16 16"><path d="M8.4 1.8 L13.6 5.7 L8.2 9.3 M13 5.6 H7.4 C4.4 5.6 2.4 7.4 2.4 9.6 C2.4 11.8 4 13.2 6.2 13.6" fill="none" stroke="#4f9470" stroke-width="2" stroke-linecap="butt" stroke-linejoin="miter"/></svg>
<svg style="left:111px;top:385px;" width="6" height="4" viewBox="0 0 6 4"><path d="M0 0h5.4l-2.7 3.2z" fill="#4f9470"/></svg>
<svg style="left:129px;top:381px;" width="10" height="10" viewBox="0 0 10 10"><path d="M0.5 2h8.6" stroke="#b4d2c1" stroke-width="1.1"/><path d="M1 5l3.8 3.8L8.6 5" fill="none" stroke="#b4d2c1" stroke-width="1.1"/></svg>
<div style="left:390.5px;top:380px;font-size:12px;color:#ffffff;font-weight:normal;letter-spacing:-0.580px;white-space:pre;line-height:14px;font-family:'Liberation Sans', sans-serif;">DAFTAR PEMBAYARAN NOV-DES 2025.xls</div>
<div style="left:614.5px;top:380px;font-size:12px;color:#ffffff;font-weight:normal;letter-spacing:0.214px;white-space:pre;line-height:14px;font-family:'Liberation Sans', sans-serif;">[Compatibility Mode]</div>
<div style="left:735px;top:380px;font-size:12px;color:#ffffff;font-weight:normal;white-space:pre;line-height:14px;font-family:'Liberation Sans', sans-serif;">-</div>
<div style="left:745.5px;top:380px;font-size:12px;color:#ffffff;font-weight:normal;letter-spacing:-0.114px;white-space:pre;line-height:14px;font-family:'Liberation Sans', sans-serif;">Excel (Product Activation Failed)</div>
<svg style="left:1022px;top:377px;" width="17" height="16" viewBox="0 0 17 16"><path d="M8.5 1.3L15.2 13.9H1.8Z" fill="#f9e2a4" stroke="#e27d12" stroke-width="1.5" stroke-linejoin="round"/><path d="M8.5 4.8v5.2" stroke="#2a2a2a" stroke-width="1.5"/><rect x="7.75" y="11" width="1.5" height="1.5" fill="#2a2a2a"/></svg>
<div style="left:1048.4px;top:378.5px;font-size:13px;color:#ffffff;font-weight:normal;letter-spacing:-0.181px;white-space:pre;line-height:16px;font-family:'Liberation Sans', sans-serif;">billy</div>
<div style="left:1081px;top:373px;width:24px;height:24px;background:#d6d6d6;border-radius:50%;"></div>
<div style="left:1089.8px;top:378.5px;font-size:11px;color:#505068;font-weight:normal;white-space:pre;line-height:13px;font-family:'Liberation Sans', sans-serif;transform:scaleX(0.8);transform-origin:50% 50%;">B</div>
<svg style="left:1133px;top:380px;" width="13" height="10" viewBox="0 0 13 10"><path d="M0.5 0.5h12v9h-12z M0.5 2.5h12 M6.5 9.5v-5 M4.7 6.3l1.8-1.8 1.8 1.8" fill="none" stroke="#ffffff" stroke-width="1"/></svg>
<div style="left:1181px;top:385px;width:10px;height:1px;background:#ffffff;"></div>
<div style="left:1227px;top:380px;width:10px;height:10px;border:1px solid #ffffff;box-sizing:border-box;"></div>
<svg style="left:1272px;top:379px;" width="12" height="12" viewBox="0 0 12 12"><path d="M0.8 0.8l10.4 10.4M11.2 0.8L0.8 11.2" stroke="#ffffff" stroke-width="1.1"/></svg>
<svg style="left:1228px;top:410px;" width="17" height="18" viewBox="0 0 17 18"><circle cx="8" cy="6" r="4.3" fill="none" stroke="#fff" stroke-width="1.3"/><path d="M1 16.5c0.6-4 2.6-6 5-6.6" fill="none" stroke="#fff" stroke-width="1.3"/><path d="M12.5 10v7M9 13.5h7" stroke="#fff" stroke-width="1.3"/></svg>
<div style="left:1247.9px;top:412px;font-size:12.3px;color:#fff;font-weight:normal;letter-spacing:-0.666px;white-space:pre;line-height:15px;font-family:'Liberation Sans', sans-serif;">Share</div>
<div style="left:26.6px;top:412px;font-size:12.3px;color:#fff;font-weight:normal;letter-spacing:-0.582px;white-space:pre;line-height:15px;font-family:'Liberation Sans', sans-serif;">File</div>
<div style="left:79.3px;top:412px;font-size:12.3px;color:#fff;font-weight:normal;letter-spacing:-0.028px;white-space:pre;line-height:15px;font-family:'Liberation Sans', sans-serif;">Home</div>
<div style="left:139.3px;top:412px;font-size:12.3px;color:#fff;font-weight:normal;letter-spacing:-0.344px;white-space:pre;line-height:15px;font-family:'Liberation Sans', sans-serif;">Insert</div>
<div style="left:195.5px;top:412px;font-size:12.3px;color:#fff;font-weight:normal;letter-spacing:-0.415px;white-space:pre;line-height:15px;font-family:'Liberation Sans', sans-serif;">Page Layout</div>
<div style="left:287px;top:412px;font-size:12.3px;color:#fff;font-weight:normal;letter-spacing:-0.281px;white-space:pre;line-height:15px;font-family:'Liberation Sans', sans-serif;">Formulas</div>
<div style="left:363px;top:412px;font-size:12.3px;color:#fff;font-weight:normal;letter-spacing:-0.496px;white-space:pre;line-height:15px;font-family:'Liberation Sans', sans-serif;">Data</div>
<div style="left:414px;top:412px;font-size:12.3px;color:#fff;font-weight:normal;letter-spacing:-0.388px;white-space:pre;line-height:15px;font-family:'Liberation Sans', sans-serif;">Review</div>
<div style="left:478px;top:412px;font-size:12.3px;color:#fff;font-weight:normal;letter-spacing:-0.609px;white-space:pre;line-height:15px;font-family:'Liberation Sans', sans-serif;">View</div>
<div style="left:530px;top:412px;font-size:12.3px;color:#fff;font-weight:normal;letter-spacing:-0.074px;white-space:pre;line-height:15px;font-family:'Liberation Sans', sans-serif;">Help</div>
<div style="left:610px;top:412px;font-size:12.3px;color:#fff;font-weight:normal;letter-spacing:-0.046px;white-space:pre;line-height:15px;font-family:'Liberation Sans', sans-serif;">Tell me what you want to do</div>
<svg style="left:585px;top:410px;" width="12" height="18" viewBox="0 0 12 18"><path d="M3.6 12.3C3.4 10 1.1 8.7 1.1 6a4.9 4.9 0 0 1 9.8 0C10.9 8.7 8.6 10 8.4 12.3z M3.6 12.3v2.4h4.8v-2.4 M4.3 16.4h3.4" fill="none" stroke="#fff" stroke-width="1.15"/></svg>
<div style="left:11px;top:444px;width:102px;height:26px;background:#fff;border:1px solid #c8c8c8;box-sizing:border-box;"></div>
<div style="left:18.5px;top:451px;font-size:12.6px;color:#333;font-weight:normal;letter-spacing:0.065px;white-space:pre;line-height:15px;font-family:'Liberation Sans', sans-serif;">AF2550</div>
<svg style="left:99px;top:454px;" width="8" height="5" viewBox="0 0 8 5"><path d="M0 0.3h7.4l-3.7 4z" fill="#666"/></svg>
<div style="left:127px;top:452px;width:2px;height:2px;background:#b4b4b4;"></div>
<div style="left:127px;top:456px;width:2px;height:2px;background:#b4b4b4;"></div>
<div style="left:127px;top:460px;width:2px;height:2px;background:#b4b4b4;"></div>
<div style="left:143px;top:444px;width:110px;height:26px;background:#fff;border:1px solid #c8c8c8;box-sizing:border-box;"></div>
<svg style="left:157px;top:452px;" width="11" height="11" viewBox="0 0 11 11"><path d="M1 1l9 9M10 1l-9 9" stroke="#c6c6c6" stroke-width="1.7"/></svg>
<svg style="left:191px;top:452px;" width="14" height="11" viewBox="0 0 14 11"><path d="M1 6l4 4 8-9" fill="none" stroke="#d0d0d0" stroke-width="2.2"/></svg>
<div style="left:229px;top:447px;font-size:15px;color:#555;font-weight:bold;white-space:pre;line-height:18px;font-style:italic;font-family:'Liberation Serif', serif;">f</div>
<div style="left:233.5px;top:451px;font-size:11px;color:#555;font-weight:bold;white-space:pre;line-height:13px;font-style:italic;font-family:'Liberation Serif', serif;">x</div>
<div style="left:256px;top:444px;width:1040px;height:26px;background:#fff;border:1px solid #c8c8c8;box-sizing:border-box;"></div>
<div style="left:269.5px;top:451px;font-size:12.6px;color:#333;font-weight:normal;letter-spacing:-0.134px;white-space:pre;line-height:15px;font-family:'Liberation Sans', sans-serif;">&#x27;49,699</div>
<svg style="left:1283px;top:453px;" width="9" height="7" viewBox="0 0 9 7"><path d="M1 1.2l3.5 3.5 3.5-3.5" fill="none" stroke="#555" stroke-width="1.7"/></svg>
<svg style="left:23px;top:484px;" width="12" height="12" viewBox="0 0 12 12"><path d="M11.5 0.5v11h-11z" fill="#b9b9b9"/></svg>
<div style="left:39px;top:483px;width:30px;height:16px;line-height:16px;text-align:center;font-size:12.4px;color:#212121;overflow:hidden;letter-spacing:-0.2px;font-family:'Liberation Sans', sans-serif">A</div>
<div style="left:70px;top:483px;width:13px;height:16px;line-height:16px;text-align:center;font-size:12.4px;color:#212121;overflow:hidden;letter-spacing:-0.2px;font-family:'Liberation Sans', sans-serif">B</div>
<div style="left:84px;top:483px;width:28px;height:16px;line-height:16px;text-align:center;font-size:12.4px;color:#212121;overflow:hidden;letter-spacing:-0.2px;font-family:'Liberation Sans', sans-serif">C</div>
<div style="left:113px;top:483px;width:18px;height:16px;line-height:16px;text-align:center;font-size:12.4px;color:#212121;overflow:hidden;letter-spacing:-0.2px;font-family:'Liberation Sans', sans-serif">D</div>
<div style="left:132px;top:483px;width:21px;height:16px;line-height:16px;text-align:center;font-size:12.4px;color:#212121;overflow:hidden;letter-spacing:-0.2px;font-family:'Liberation Sans', sans-serif">E</div>
<div style="left:154px;top:483px;width:27px;height:16px;line-height:16px;text-align:center;font-size:12.4px;color:#212121;overflow:hidden;letter-spacing:-0.2px;font-family:'Liberation Sans', sans-serif">F</div>
<div style="left:182px;top:483px;width:33px;height:16px;line-height:16px;text-align:center;font-size:12.4px;color:#212121;overflow:hidden;letter-spacing:-0.2px;font-family:'Liberation Sans', sans-serif">G</div>
<div style="left:216px;top:483px;width:32px;height:16px;line-height:16px;text-align:center;font-size:12.4px;color:#212121;overflow:hidden;letter-spacing:-0.2px;font-family:'Liberation Sans', sans-serif">H</div>
<div style="left:249px;top:483px;width:17px;height:16px;line-height:16px;text-align:center;font-size:12.4px;color:#212121;overflow:hidden;letter-spacing:-0.2px;font-family:'Liberation Sans', sans-serif">I</div>
<div style="left:267px;top:483px;width:17px;height:16px;line-height:16px;text-align:center;font-size:12.4px;color:#212121;overflow:hidden;letter-spacing:-0.2px;font-family:'Liberation Sans', sans-serif">J</div>
<div style="left:285px;top:483px;width:19px;height:16px;line-height:16px;text-align:center;font-size:12.4px;color:#212121;overflow:hidden;letter-spacing:-0.2px;font-family:'Liberation Sans', sans-serif">K</div>
<div style="left:305px;top:483px;width:32px;height:16px;line-height:16px;text-align:center;font-size:12.4px;color:#212121;overflow:hidden;letter-spacing:-0.2px;font-family:'Liberation Sans', sans-serif">L</div>
<div style="left:338px;top:483px;width:24px;height:16px;line-height:16px;text-align:center;font-size:12.4px;color:#212121;overflow:hidden;letter-spacing:-0.2px;font-family:'Liberation Sans', sans-serif">M</div>
<div style="left:363px;top:483px;width:21px;height:16px;line-height:16px;text-align:center;font-size:12.4px;color:#212121;overflow:hidden;letter-spacing:-0.2px;font-family:'Liberation Sans', sans-serif">N</div>
<div style="left:385px;top:483px;width:30px;height:16px;line-height:16px;text-align:center;font-size:12.4px;color:#212121;overflow:hidden;letter-spacing:-0.2px;font-family:'Liberation Sans', sans-serif">O</div>
<div style="left:416px;top:483px;width:37px;height:16px;line-height:16px;text-align:center;font-size:12.4px;color:#212121;overflow:hidden;letter-spacing:-0.2px;font-family:'Liberation Sans', sans-serif">P</div>
<div style="left:454px;top:483px;width:42px;height:16px;line-height:16px;text-align:center;font-size:12.4px;color:#212121;overflow:hidden;letter-spacing:-0.2px;font-family:'Liberation Sans', sans-serif">Q</div>
<div style="left:497px;top:483px;width:23px;height:16px;line-height:16px;text-align:center;font-size:12.4px;color:#212121;overflow:hidden;letter-spacing:-0.2px;font-family:'Liberation Sans', sans-serif">R</div>
<div style="left:521px;top:483px;width:19px;height:16px;line-height:16px;text-align:center;font-size:12.4px;color:#212121;overflow:hidden;letter-spacing:-0.2px;font-family:'Liberation Sans', sans-serif">S</div>
<div style="left:541px;top:483px;width:25px;height:16px;line-height:16px;text-align:center;font-size:12.4px;color:#212121;overflow:hidden;letter-spacing:-0.2px;font-family:'Liberation Sans', sans-serif">T</div>
<div style="left:567px;top:483px;width:54px;height:16px;line-height:16px;text-align:center;font-size:12.4px;color:#212121;overflow:hidden;letter-spacing:-0.2px;font-family:'Liberation Sans', sans-serif">U</div>
<div style="left:622px;top:483px;width:54px;height:16px;line-height:16px;text-align:center;font-size:12.4px;color:#212121;overflow:hidden;letter-spacing:-0.2px;font-family:'Liberation Sans', sans-serif">V</div>
<div style="left:677px;top:483px;width:34px;height:16px;line-height:16px;text-align:center;font-size:12.4px;color:#212121;overflow:hidden;letter-spacing:-0.2px;font-family:'Liberation Sans', sans-serif">W</div>
<div style="left:712px;top:483px;width:24px;height:16px;line-height:16px;text-align:center;font-size:12.4px;color:#212121;overflow:hidden;letter-spacing:-0.2px;font-family:'Liberation Sans', sans-serif">X</div>
<div style="left:737px;top:483px;width:54px;height:16px;line-height:16px;text-align:center;font-size:12.4px;color:#212121;overflow:hidden;letter-spacing:-0.2px;font-family:'Liberation Sans', sans-serif">Y</div>
<div style="left:792px;top:483px;width:32px;height:16px;line-height:16px;text-align:center;font-size:12.4px;color:#212121;overflow:hidden;letter-spacing:-0.2px;font-family:'Liberation Sans', sans-serif">Z</div>
<div style="left:825px;top:483px;width:16px;height:16px;line-height:16px;text-align:center;font-size:12.4px;color:#212121;overflow:hidden;letter-spacing:-0.2px;font-family:'Liberation Sans', sans-serif">AA</div>
<div style="left:842px;top:483px;width:14px;height:16px;line-height:16px;text-align:center;font-size:12.4px;color:#212121;overflow:hidden;letter-spacing:-0.2px;font-family:'Liberation Sans', sans-serif">AB</div>
<div style="left:857px;top:483px;width:18px;height:16px;line-height:16px;text-align:center;font-size:12.4px;color:#212121;overflow:hidden;letter-spacing:-0.2px;font-family:'Liberation Sans', sans-serif">AC</div>
<div style="left:876px;top:483px;width:39px;height:16px;line-height:16px;text-align:center;font-size:12.4px;color:#212121;overflow:hidden;letter-spacing:-0.2px;font-family:'Liberation Sans', sans-serif">AD</div>
<div style="left:916px;top:483px;width:54px;height:16px;line-height:16px;text-align:center;font-size:12.4px;color:#212121;overflow:hidden;letter-spacing:-0.2px;font-family:'Liberation Sans', sans-serif">AE</div>
<div style="left:971px;top:480px;width:54px;height:19px;background:#d2d2d2;"></div>
<div style="left:970px;top:498px;width:56px;height:2px;background:#217346;"></div>
<div style="left:971px;top:483px;width:54px;height:16px;line-height:16px;text-align:center;font-size:12.4px;color:#1e7145;overflow:hidden;letter-spacing:-0.2px;font-family:'Liberation Sans', sans-serif">AF</div>
<div style="left:1026px;top:483px;width:17px;height:16px;line-height:16px;text-align:center;font-size:12.4px;color:#212121;overflow:hidden;letter-spacing:-0.2px;font-family:'Liberation Sans', sans-serif">AG</div>
<div style="left:1044px;top:483px;width:24px;height:16px;line-height:16px;text-align:center;font-size:12.4px;color:#212121;overflow:hidden;letter-spacing:-0.2px;font-family:'Liberation Sans', sans-serif">AH</div>
<div style="left:1069px;top:483px;width:37px;height:16px;line-height:16px;text-align:center;font-size:12.4px;color:#212121;overflow:hidden;letter-spacing:-0.2px;font-family:'Liberation Sans', sans-serif">AI</div>
<div style="left:1107px;top:483px;width:22px;height:16px;line-height:16px;text-align:center;font-size:12.4px;color:#212121;overflow:hidden;letter-spacing:-0.2px;font-family:'Liberation Sans', sans-serif">AJ</div>
<div style="left:1130px;top:483px;width:153px;height:16px;line-height:16px;text-align:center;font-size:12.4px;color:#212121;overflow:hidden;letter-spacing:-0.2px;font-family:'Liberation Sans', sans-serif">AK</div>
<div style="left:38px;top:480px;width:1px;height:19px;background:#9f9f9f;"></div>
<div style="left:69px;top:480px;width:1px;height:19px;background:#c3c3c3;"></div>
<div style="left:83px;top:480px;width:1px;height:19px;background:#c3c3c3;"></div>
<div style="left:112px;top:480px;width:1px;height:19px;background:#c3c3c3;"></div>
<div style="left:131px;top:480px;width:1px;height:19px;background:#c3c3c3;"></div>
<div style="left:153px;top:480px;width:1px;height:19px;background:#c3c3c3;"></div>
<div style="left:181px;top:480px;width:1px;height:19px;background:#c3c3c3;"></div>
<div style="left:215px;top:480px;width:1px;height:19px;background:#c3c3c3;"></div>
<div style="left:248px;top:480px;width:1px;height:19px;background:#c3c3c3;"></div>
<div style="left:266px;top:480px;width:1px;height:19px;background:#c3c3c3;"></div>
<div style="left:284px;top:480px;width:1px;height:19px;background:#c3c3c3;"></div>
<div style="left:304px;top:480px;width:1px;height:19px;background:#c3c3c3;"></div>
<div style="left:337px;top:480px;width:1px;height:19px;background:#c3c3c3;"></div>
<div style="left:362px;top:480px;width:1px;height:19px;background:#c3c3c3;"></div>
<div style="left:384px;top:480px;width:1px;height:19px;background:#c3c3c3;"></div>
<div style="left:415px;top:480px;width:1px;height:19px;background:#c3c3c3;"></div>
<div style="left:453px;top:480px;width:1px;height:19px;background:#c3c3c3;"></div>
<div style="left:496px;top:480px;width:1px;height:19px;background:#c3c3c3;"></div>
<div style="left:520px;top:480px;width:1px;height:19px;background:#c3c3c3;"></div>
<div style="left:540px;top:480px;width:1px;height:19px;background:#c3c3c3;"></div>
<div style="left:566px;top:480px;width:1px;height:19px;background:#c3c3c3;"></div>
<div style="left:621px;top:480px;width:1px;height:19px;background:#c3c3c3;"></div>
<div style="left:676px;top:480px;width:1px;height:19px;background:#c3c3c3;"></div>
<div style="left:711px;top:480px;width:1px;height:19px;background:#c3c3c3;"></div>
<div style="left:736px;top:480px;width:1px;height:19px;background:#c3c3c3;"></div>
<div style="left:791px;top:480px;width:1px;height:19px;background:#c3c3c3;"></div>
<div style="left:824px;top:480px;width:1px;height:19px;background:#c3c3c3;"></div>
<div style="left:841px;top:480px;width:1px;height:19px;background:#c3c3c3;"></div>
<div style="left:856px;top:480px;width:1px;height:19px;background:#c3c3c3;"></div>
<div style="left:875px;top:480px;width:1px;height:19px;background:#c3c3c3;"></div>
<div style="left:915px;top:480px;width:1px;height:19px;background:#c3c3c3;"></div>
<div style="left:970px;top:480px;width:1px;height:19px;background:#c3c3c3;"></div>
<div style="left:1025px;top:480px;width:1px;height:19px;background:#c3c3c3;"></div>
<div style="left:1043px;top:480px;width:1px;height:19px;background:#c3c3c3;"></div>
<div style="left:1068px;top:480px;width:1px;height:19px;background:#c3c3c3;"></div>
<div style="left:1106px;top:480px;width:1px;height:19px;background:#c3c3c3;"></div>
<div style="left:1129px;top:480px;width:1px;height:19px;background:#c3c3c3;"></div>
<div style="left:6px;top:499px;width:1274px;height:1px;background:#9f9f9f;"></div>
<div style="left:39px;top:500px;width:1240px;height:183px;background:#fff;"></div>
<div style="left:1279px;top:500px;width:1px;height:183px;background:#9f9f9f;"></div>
<div style="left:38px;top:500px;width:1px;height:183px;background:#9f9f9f;"></div>
<div style="left:6px;top:533px;width:32px;height:1px;background:#9f9f9f;"></div>
<div style="left:6px;top:500px;width:32px;height:33px;overflow:hidden;font-family:'Liberation Sans', sans-serif"><div style="left:0;top:17px;width:100%;text-align:center;font-size:12.4px;line-height:16px;letter-spacing:0.25px;color:#212121">10</div></div>
<div style="left:39px;top:533px;width:1240px;height:1px;background:#8c8c8c;"></div>
<div style="left:83px;top:500px;width:1px;height:34px;background:#d4d4d4;"></div>
<div style="left:39px;top:500px;width:44px;height:33px;overflow:hidden;font-family:'Liberation Sans', sans-serif"><div style="left:3px;transform-origin:0 0;top:6px;text-align:left;white-space:pre;font-size:10.67px;line-height:12px;letter-spacing:0.02px;color:#000;font-weight:bold;">Tgl<br>Bayar</div></div>
<div style="left:131px;top:500px;width:1px;height:34px;background:#d4d4d4;"></div>
<div style="left:84px;top:500px;width:47px;height:33px;overflow:hidden;font-family:'Liberation Sans', sans-serif"><div style="left:3px;transform-origin:0 0;top:18px;text-align:left;white-space:pre;font-size:10.67px;line-height:12px;letter-spacing:0.02px;color:#000;font-weight:bold;">Batal</div></div>
<div style="left:181px;top:500px;width:1px;height:34px;background:#d4d4d4;"></div>
<div style="left:132px;top:500px;width:49px;height:33px;overflow:hidden;font-family:'Liberation Sans', sans-serif"><div style="left:3px;transform-origin:0 0;top:6px;text-align:left;white-space:pre;font-size:10.67px;line-height:12px;letter-spacing:0.02px;color:#000;font-weight:bold;">No<br>Faktur</div></div>
<div style="left:215px;top:500px;width:1px;height:34px;background:#d4d4d4;"></div>
<div style="left:182px;top:500px;width:33px;height:33px;overflow:hidden;font-family:'Liberation Sans', sans-serif"><div style="left:3px;transform-origin:0 0;top:-6px;text-align:left;white-space:pre;font-size:10.67px;line-height:12px;letter-spacing:0.02px;color:#000;font-weight:bold;">Tgl<br>Fakt<br>ur</div></div>
<div style="left:284px;top:500px;width:1px;height:34px;background:#d4d4d4;"></div>
<div style="left:216px;top:500px;width:68px;height:33px;overflow:hidden;font-family:'Liberation Sans', sans-serif"><div style="left:3px;transform-origin:0 0;top:18px;text-align:left;white-space:pre;font-size:10.67px;line-height:12px;letter-spacing:0.02px;color:#000;font-weight:bold;">Total Faktur</div></div>
<div style="left:337px;top:500px;width:1px;height:34px;background:#d4d4d4;"></div>
<div style="left:285px;top:500px;width:52px;height:33px;overflow:hidden;font-family:'Liberation Sans', sans-serif"><div style="right:2px;transform-origin:100% 0;top:-6px;text-align:right;white-space:pre;font-size:10.67px;line-height:12px;letter-spacing:0.02px;color:#000;font-weight:bold;">Total<br>Pembaya<br>ran</div></div>
<div style="left:384px;top:500px;width:1px;height:34px;background:#d4d4d4;"></div>
<div style="left:338px;top:500px;width:46px;height:33px;overflow:hidden;font-family:'Liberation Sans', sans-serif"><div style="right:2px;transform-origin:100% 0;top:18px;text-align:right;white-space:pre;font-size:10.67px;line-height:12px;letter-spacing:0.02px;color:#000;font-weight:bold;">Arrear</div></div>
<div style="left:415px;top:500px;width:1px;height:34px;background:#d4d4d4;"></div>
<div style="left:385px;top:500px;width:30px;height:33px;overflow:hidden;font-family:'Liberation Sans', sans-serif"><div style="right:2px;transform-origin:100% 0;top:6px;text-align:right;white-space:pre;font-size:10.67px;line-height:12px;letter-spacing:0.02px;color:#000;font-weight:bold;">Tuna<br>i</div></div>
<div style="left:453px;top:500px;width:1px;height:34px;background:#d4d4d4;"></div>
<div style="left:416px;top:500px;width:37px;height:33px;overflow:hidden;font-family:'Liberation Sans', sans-serif"><div style="left:3px;transform-origin:0 0;top:6px;text-align:left;white-space:pre;font-size:10.67px;line-height:12px;letter-spacing:0.02px;color:#000;font-weight:bold;">No<br>Cek</div></div>
<div style="left:520px;top:500px;width:1px;height:34px;background:#d4d4d4;"></div>
<div style="left:454px;top:500px;width:66px;height:33px;overflow:hidden;font-family:'Liberation Sans', sans-serif"><div style="right:2px;transform-origin:100% 0;top:18px;text-align:right;white-space:pre;font-size:10.67px;line-height:12px;letter-spacing:0.02px;color:#000;font-weight:bold;">Nilai Cek</div></div>
<div style="left:566px;top:500px;width:1px;height:34px;background:#d4d4d4;"></div>
<div style="left:521px;top:500px;width:45px;height:33px;overflow:hidden;font-family:'Liberation Sans', sans-serif"><div style="left:3px;transform-origin:0 0;top:-6px;text-align:left;white-space:pre;font-size:10.67px;line-height:12px;letter-spacing:0.02px;color:#000;font-weight:bold;">No<br>Transfe<br>r</div></div>
<div style="left:621px;top:500px;width:1px;height:34px;background:#d4d4d4;"></div>
<div style="left:567px;top:500px;width:54px;height:33px;overflow:hidden;font-family:'Liberation Sans', sans-serif"><div style="right:2px;transform-origin:100% 0;top:6px;text-align:right;white-space:pre;font-size:10.67px;line-height:12px;letter-spacing:0.02px;color:#000;font-weight:bold;">Nilai<br>Transfer</div></div>
<div style="left:676px;top:500px;width:1px;height:34px;background:#d4d4d4;"></div>
<div style="left:622px;top:500px;width:54px;height:33px;overflow:hidden;font-family:'Liberation Sans', sans-serif"><div style="right:2px;transform-origin:100% 0;top:6px;text-align:right;white-space:pre;font-size:10.67px;line-height:12px;letter-spacing:0.02px;color:#000;font-weight:bold;">Nilai<br>Promosi</div></div>
<div style="left:736px;top:500px;width:1px;height:34px;background:#d4d4d4;"></div>
<div style="left:677px;top:500px;width:59px;height:33px;overflow:hidden;font-family:'Liberation Sans', sans-serif"><div style="right:2px;transform-origin:100% 0;top:6px;text-align:right;white-space:pre;font-size:10.67px;line-height:12px;letter-spacing:0.02px;color:#000;font-weight:bold;">Total<br>Retur</div></div>
<div style="left:791px;top:500px;width:1px;height:34px;background:#d4d4d4;"></div>
<div style="left:737px;top:500px;width:54px;height:33px;overflow:hidden;font-family:'Liberation Sans', sans-serif"><div style="right:2px;transform-origin:100% 0;top:5px;text-align:right;white-space:pre;font-size:10.67px;line-height:12px;letter-spacing:0.02px;color:#000;font-weight:bold;">N. Non<br>Promosi</div></div>
<div style="left:856px;top:500px;width:1px;height:34px;background:#d4d4d4;"></div>
<div style="left:792px;top:500px;width:64px;height:33px;overflow:hidden;font-family:'Liberation Sans', sans-serif"><div style="right:2px;transform-origin:100% 0;top:18px;text-align:right;white-space:pre;font-size:10.67px;line-height:12px;letter-spacing:0.02px;color:#000;font-weight:bold;">Uang Muka</div></div>
<div style="left:915px;top:500px;width:1px;height:34px;background:#d4d4d4;"></div>
<div style="left:857px;top:500px;width:58px;height:33px;overflow:hidden;font-family:'Liberation Sans', sans-serif"><div style="right:2px;transform-origin:100% 0;top:18px;text-align:right;white-space:pre;font-size:10.67px;line-height:12px;letter-spacing:0.02px;color:#000;font-weight:bold;">Epayment</div></div>
<div style="left:970px;top:500px;width:1px;height:34px;background:#d4d4d4;"></div>
<div style="left:916px;top:500px;width:54px;height:33px;overflow:hidden;font-family:'Liberation Sans', sans-serif"><div style="right:2px;transform-origin:100% 0;top:6px;text-align:right;white-space:pre;font-size:10.67px;line-height:12px;letter-spacing:0.02px;color:#000;font-weight:bold;">Kurang<br>Bayar</div></div>
<div style="left:1025px;top:500px;width:1px;height:34px;background:#d4d4d4;"></div>
<div style="left:971px;top:500px;width:54px;height:33px;overflow:hidden;font-family:'Liberation Sans', sans-serif"><div style="right:2px;transform-origin:100% 0;top:6px;text-align:right;white-space:pre;font-size:10.67px;line-height:12px;letter-spacing:0.02px;color:#000;font-weight:bold;">Lebih<br>Bayar</div></div>
<div style="left:1106px;top:500px;width:1px;height:34px;background:#d4d4d4;"></div>
<div style="left:1026px;top:500px;width:80px;height:33px;overflow:hidden;font-family:'Liberation Sans', sans-serif"><div style="left:3px;transform-origin:0 0;top:18px;text-align:left;white-space:pre;font-size:10.67px;line-height:12px;letter-spacing:0.02px;color:#000;font-weight:bold;">Keterangan</div></div>
<div style="left:1129px;top:500px;width:1px;height:34px;background:#d4d4d4;"></div>
<div style="left:6px;top:549px;width:32px;height:1px;background:#c3c3c3;"></div>
<div style="left:6px;top:534px;width:32px;height:15px;overflow:hidden;font-family:'Liberation Sans', sans-serif"><div style="left:0;top:-1px;width:100%;text-align:center;font-size:12.4px;line-height:16px;letter-spacing:0.25px;color:#212121">2547</div></div>
<div style="left:39px;top:549px;width:1240px;height:1px;background:#d4d4d4;"></div>
<div style="left:566px;top:534px;width:1px;height:16px;background:#d4d4d4;"></div>
<div style="left:39px;top:534px;width:527px;height:15px;overflow:hidden;font-family:'Liberation Sans', sans-serif"><div style="left:3px;transform-origin:0 0;top:1px;text-align:left;white-space:pre;transform:scaleX(0.9059);font-size:10px;line-height:12px;letter-spacing:0px;color:#000;">No. Pembayaran : 50587307   Outlet : 6255303 - SURYA BALONG TK</div></div>
<div style="left:621px;top:534px;width:1px;height:16px;background:#d4d4d4;"></div>
<div style="left:676px;top:534px;width:1px;height:16px;background:#d4d4d4;"></div>
<div style="left:711px;top:534px;width:1px;height:16px;background:#d4d4d4;"></div>
<div style="left:736px;top:534px;width:1px;height:16px;background:#d4d4d4;"></div>
<div style="left:791px;top:534px;width:1px;height:16px;background:#d4d4d4;"></div>
<div style="left:824px;top:534px;width:1px;height:16px;background:#d4d4d4;"></div>
<div style="left:841px;top:534px;width:1px;height:16px;background:#d4d4d4;"></div>
<div style="left:856px;top:534px;width:1px;height:16px;background:#d4d4d4;"></div>
<div style="left:875px;top:534px;width:1px;height:16px;background:#d4d4d4;"></div>
<div style="left:915px;top:534px;width:1px;height:16px;background:#d4d4d4;"></div>
<div style="left:970px;top:534px;width:1px;height:16px;background:#d4d4d4;"></div>
<div style="left:1025px;top:534px;width:1px;height:16px;background:#d4d4d4;"></div>
<div style="left:1043px;top:534px;width:1px;height:16px;background:#d4d4d4;"></div>
<div style="left:1068px;top:534px;width:1px;height:16px;background:#d4d4d4;"></div>
<div style="left:1106px;top:534px;width:1px;height:16px;background:#d4d4d4;"></div>
<div style="left:1129px;top:534px;width:1px;height:16px;background:#d4d4d4;"></div>
<div style="left:6px;top:570px;width:32px;height:1px;background:#c3c3c3;"></div>
<div style="left:6px;top:550px;width:32px;height:20px;overflow:hidden;font-family:'Liberation Sans', sans-serif"><div style="left:0;top:4px;width:100%;text-align:center;font-size:12.4px;line-height:16px;letter-spacing:0.25px;color:#212121">2548</div></div>
<div style="left:39px;top:570px;width:1240px;height:1px;background:#d4d4d4;"></div>
<div style="left:83px;top:550px;width:1px;height:21px;background:#d4d4d4;"></div>
<svg style="left:39px;top:550px;" width="6" height="6" viewBox="0 0 6 6"><path d="M0 0h6L0 6z" fill="#0f7b24"/></svg>
<div style="left:39px;top:550px;width:44px;height:20px;overflow:hidden;font-family:'Liberation Sans', sans-serif"><div style="left:3px;transform-origin:0 0;top:0px;text-align:left;white-space:pre;transform:scaleX(0.9);font-size:10px;line-height:12px;letter-spacing:0px;color:#000;">3<i>1</i>-OCT-<br>25</div></div>
<div style="left:131px;top:550px;width:1px;height:21px;background:#d4d4d4;"></div>
<div style="left:181px;top:550px;width:1px;height:21px;background:#d4d4d4;"></div>
<svg style="left:132px;top:550px;" width="6" height="6" viewBox="0 0 6 6"><path d="M0 0h6L0 6z" fill="#0f7b24"/></svg>
<div style="left:132px;top:550px;width:49px;height:20px;overflow:hidden;font-family:'Liberation Sans', sans-serif"><div style="left:3px;transform-origin:0 0;top:0px;text-align:left;white-space:pre;transform:scaleX(0.9);font-size:10px;line-height:12px;letter-spacing:0px;color:#000;">36<i>1</i>23507</div></div>
<div style="left:215px;top:550px;width:1px;height:21px;background:#d4d4d4;"></div>
<svg style="left:182px;top:550px;" width="6" height="6" viewBox="0 0 6 6"><path d="M0 0h6L0 6z" fill="#0f7b24"/></svg>
<div style="left:182px;top:550px;width:33px;height:20px;overflow:hidden;font-family:'Liberation Sans', sans-serif"><div style="left:3px;transform-origin:0 0;top:0px;text-align:left;white-space:pre;transform:scaleX(0.9);font-size:10px;line-height:12px;letter-spacing:0px;color:#000;"><i>1</i>8-<br>OCT-</div></div>
<div style="left:284px;top:550px;width:1px;height:21px;background:#d4d4d4;"></div>
<svg style="left:216px;top:550px;" width="6" height="6" viewBox="0 0 6 6"><path d="M0 0h6L0 6z" fill="#0f7b24"/></svg>
<div style="left:216px;top:550px;width:68px;height:20px;overflow:hidden;font-family:'Liberation Sans', sans-serif"><div style="right:2px;transform-origin:100% 0;top:0px;text-align:right;white-space:pre;transform:scaleX(0.9);font-size:10px;line-height:12px;letter-spacing:0px;color:#000;">3,537,838</div></div>
<div style="left:337px;top:550px;width:1px;height:21px;background:#d4d4d4;"></div>
<svg style="left:285px;top:550px;" width="6" height="6" viewBox="0 0 6 6"><path d="M0 0h6L0 6z" fill="#0f7b24"/></svg>
<div style="left:285px;top:550px;width:52px;height:20px;overflow:hidden;font-family:'Liberation Sans', sans-serif"><div style="right:2px;transform-origin:100% 0;top:0px;text-align:right;white-space:pre;transform:scaleX(0.9);font-size:10px;line-height:12px;letter-spacing:0px;color:#000;"><i>1</i>,420,800</div></div>
<div style="left:362px;top:550px;width:1px;height:21px;background:#d4d4d4;"></div>
<svg style="left:338px;top:550px;" width="6" height="6" viewBox="0 0 6 6"><path d="M0 0h6L0 6z" fill="#0f7b24"/></svg>
<div style="left:338px;top:550px;width:24px;height:20px;overflow:hidden;font-family:'Liberation Sans', sans-serif"><div style="right:2px;transform-origin:100% 0;top:0px;text-align:right;white-space:pre;transform:scaleX(0.9);font-size:10px;line-height:12px;letter-spacing:0px;color:#000;"><i>1</i>2</div></div>
<div style="left:415px;top:550px;width:1px;height:21px;background:#d4d4d4;"></div>
<svg style="left:363px;top:550px;" width="6" height="6" viewBox="0 0 6 6"><path d="M0 0h6L0 6z" fill="#0f7b24"/></svg>
<div style="left:363px;top:550px;width:52px;height:20px;overflow:hidden;font-family:'Liberation Sans', sans-serif"><div style="right:2px;transform-origin:100% 0;top:0px;text-align:right;white-space:pre;transform:scaleX(0.9);font-size:10px;line-height:12px;letter-spacing:0px;color:#000;">0</div></div>
<div style="left:453px;top:550px;width:1px;height:21px;background:#d4d4d4;"></div>
<div style="left:520px;top:550px;width:1px;height:21px;background:#d4d4d4;"></div>
<svg style="left:454px;top:550px;" width="6" height="6" viewBox="0 0 6 6"><path d="M0 0h6L0 6z" fill="#0f7b24"/></svg>
<div style="left:454px;top:550px;width:66px;height:20px;overflow:hidden;font-family:'Liberation Sans', sans-serif"><div style="right:2px;transform-origin:100% 0;top:0px;text-align:right;white-space:pre;transform:scaleX(0.9);font-size:10px;line-height:12px;letter-spacing:0px;color:#000;">0</div></div>
<div style="left:566px;top:550px;width:1px;height:21px;background:#d4d4d4;"></div>
<div style="left:621px;top:550px;width:1px;height:21px;background:#d4d4d4;"></div>
<svg style="left:567px;top:550px;" width="6" height="6" viewBox="0 0 6 6"><path d="M0 0h6L0 6z" fill="#0f7b24"/></svg>
<div style="left:567px;top:550px;width:54px;height:20px;overflow:hidden;font-family:'Liberation Sans', sans-serif"><div style="right:2px;transform-origin:100% 0;top:0px;text-align:right;white-space:pre;transform:scaleX(0.9);font-size:10px;line-height:12px;letter-spacing:0px;color:#000;">0</div></div>
<div style="left:676px;top:550px;width:1px;height:21px;background:#d4d4d4;"></div>
<svg style="left:622px;top:550px;" width="6" height="6" viewBox="0 0 6 6"><path d="M0 0h6L0 6z" fill="#0f7b24"/></svg>
<div style="left:622px;top:550px;width:54px;height:20px;overflow:hidden;font-family:'Liberation Sans', sans-serif"><div style="right:2px;transform-origin:100% 0;top:0px;text-align:right;white-space:pre;transform:scaleX(0.9);font-size:10px;line-height:12px;letter-spacing:0px;color:#000;">0</div></div>
<div style="left:736px;top:550px;width:1px;height:21px;background:#d4d4d4;"></div>
<svg style="left:677px;top:550px;" width="6" height="6" viewBox="0 0 6 6"><path d="M0 0h6L0 6z" fill="#0f7b24"/></svg>
<div style="left:677px;top:550px;width:59px;height:20px;overflow:hidden;font-family:'Liberation Sans', sans-serif"><div style="right:2px;transform-origin:100% 0;top:0px;text-align:right;white-space:pre;transform:scaleX(0.9);font-size:10px;line-height:12px;letter-spacing:0px;color:#000;"><i>1</i>,420,800</div></div>
<div style="left:791px;top:550px;width:1px;height:21px;background:#d4d4d4;"></div>
<svg style="left:737px;top:550px;" width="6" height="6" viewBox="0 0 6 6"><path d="M0 0h6L0 6z" fill="#0f7b24"/></svg>
<div style="left:737px;top:550px;width:54px;height:20px;overflow:hidden;font-family:'Liberation Sans', sans-serif"><div style="right:2px;transform-origin:100% 0;top:0px;text-align:right;white-space:pre;transform:scaleX(0.9);font-size:10px;line-height:12px;letter-spacing:0px;color:#000;">0</div></div>
<div style="left:856px;top:550px;width:1px;height:21px;background:#d4d4d4;"></div>
<svg style="left:792px;top:550px;" width="6" height="6" viewBox="0 0 6 6"><path d="M0 0h6L0 6z" fill="#0f7b24"/></svg>
<div style="left:792px;top:550px;width:64px;height:20px;overflow:hidden;font-family:'Liberation Sans', sans-serif"><div style="right:2px;transform-origin:100% 0;top:0px;text-align:right;white-space:pre;transform:scaleX(0.9);font-size:10px;line-height:12px;letter-spacing:0px;color:#000;">0</div></div>
<div style="left:915px;top:550px;width:1px;height:21px;background:#d4d4d4;"></div>
<svg style="left:857px;top:550px;" width="6" height="6" viewBox="0 0 6 6"><path d="M0 0h6L0 6z" fill="#0f7b24"/></svg>
<div style="left:857px;top:550px;width:58px;height:20px;overflow:hidden;font-family:'Liberation Sans', sans-serif"><div style="right:2px;transform-origin:100% 0;top:0px;text-align:right;white-space:pre;transform:scaleX(0.9);font-size:10px;line-height:12px;letter-spacing:0px;color:#000;">0</div></div>
<div style="left:970px;top:550px;width:1px;height:21px;background:#d4d4d4;"></div>
<svg style="left:916px;top:550px;" width="6" height="6" viewBox="0 0 6 6"><path d="M0 0h6L0 6z" fill="#0f7b24"/></svg>
<div style="left:916px;top:550px;width:54px;height:20px;overflow:hidden;font-family:'Liberation Sans', sans-serif"><div style="right:2px;transform-origin:100% 0;top:0px;text-align:right;white-space:pre;transform:scaleX(0.9);font-size:10px;line-height:12px;letter-spacing:0px;color:#000;">0</div></div>
<div style="left:1025px;top:550px;width:1px;height:21px;background:#d4d4d4;"></div>
<svg style="left:971px;top:550px;" width="6" height="6" viewBox="0 0 6 6"><path d="M0 0h6L0 6z" fill="#0f7b24"/></svg>
<div style="left:971px;top:550px;width:54px;height:20px;overflow:hidden;font-family:'Liberation Sans', sans-serif"><div style="right:2px;transform-origin:100% 0;top:0px;text-align:right;white-space:pre;transform:scaleX(0.9);font-size:10px;line-height:12px;letter-spacing:0px;color:#000;">0</div></div>
<div style="left:6px;top:586px;width:32px;height:1px;background:#c3c3c3;"></div>
<div style="left:6px;top:571px;width:32px;height:15px;overflow:hidden;font-family:'Liberation Sans', sans-serif"><div style="left:0;top:-1px;width:100%;text-align:center;font-size:12.4px;line-height:16px;letter-spacing:0.25px;color:#212121">2549</div></div>
<div style="left:39px;top:571px;width:1240px;height:16px;background:#ffff00;"></div>
<div style="left:39px;top:571px;width:527px;height:15px;overflow:hidden;font-family:'Liberation Sans', sans-serif"><div style="left:3px;transform-origin:0 0;top:1px;text-align:left;white-space:pre;transform:scaleX(0.9258);font-size:10px;line-height:12px;letter-spacing:0px;color:#000;">No. Pembayaran : 50587308   Outlet : 6255049 - CV CAHAYA SURYA UTAMA</div></div>
<div style="left:6px;top:587px;width:32px;height:20px;background:#d2d2d2;"></div>
<div style="left:37px;top:586px;width:2px;height:22px;background:#217346;"></div>
<div style="left:6px;top:607px;width:32px;height:1px;background:#c3c3c3;"></div>
<div style="left:6px;top:587px;width:32px;height:20px;overflow:hidden;font-family:'Liberation Sans', sans-serif"><div style="left:0;top:4px;width:100%;text-align:center;font-size:12.4px;line-height:16px;letter-spacing:0.25px;color:#1e7145">2550</div></div>
<div style="left:39px;top:587px;width:1240px;height:21px;background:#ffff00;"></div>
<svg style="left:39px;top:587px;" width="6" height="6" viewBox="0 0 6 6"><path d="M0 0h6L0 6z" fill="#0f7b24"/></svg>
<div style="left:39px;top:587px;width:44px;height:20px;overflow:hidden;font-family:'Liberation Sans', sans-serif"><div style="left:3px;transform-origin:0 0;top:0px;text-align:left;white-space:pre;transform:scaleX(0.9);font-size:10px;line-height:12px;letter-spacing:0px;color:#000;">3<i>1</i>-OCT-<br>25</div></div>
<svg style="left:132px;top:587px;" width="6" height="6" viewBox="0 0 6 6"><path d="M0 0h6L0 6z" fill="#0f7b24"/></svg>
<div style="left:132px;top:587px;width:49px;height:20px;overflow:hidden;font-family:'Liberation Sans', sans-serif"><div style="left:3px;transform-origin:0 0;top:0px;text-align:left;white-space:pre;transform:scaleX(0.9);font-size:10px;line-height:12px;letter-spacing:0px;color:#000;">36<i>1</i>08<i>1</i>20</div></div>
<svg style="left:182px;top:587px;" width="6" height="6" viewBox="0 0 6 6"><path d="M0 0h6L0 6z" fill="#0f7b24"/></svg>
<div style="left:182px;top:587px;width:33px;height:20px;overflow:hidden;font-family:'Liberation Sans', sans-serif"><div style="left:3px;transform-origin:0 0;top:0px;text-align:left;white-space:pre;transform:scaleX(0.9);font-size:10px;line-height:12px;letter-spacing:0px;color:#000;"><i>1</i>5-JUL-<br>25</div></div>
<svg style="left:216px;top:587px;" width="6" height="6" viewBox="0 0 6 6"><path d="M0 0h6L0 6z" fill="#0f7b24"/></svg>
<div style="left:216px;top:587px;width:68px;height:20px;overflow:hidden;font-family:'Liberation Sans', sans-serif"><div style="right:2px;transform-origin:100% 0;top:0px;text-align:right;white-space:pre;transform:scaleX(0.9);font-size:10px;line-height:12px;letter-spacing:0px;color:#000;"><i>1</i>,006,03<i>1</i></div></div>
<svg style="left:285px;top:587px;" width="6" height="6" viewBox="0 0 6 6"><path d="M0 0h6L0 6z" fill="#0f7b24"/></svg>
<div style="left:285px;top:587px;width:52px;height:20px;overflow:hidden;font-family:'Liberation Sans', sans-serif"><div style="right:2px;transform-origin:100% 0;top:0px;text-align:right;white-space:pre;transform:scaleX(0.9);font-size:10px;line-height:12px;letter-spacing:0px;color:#000;">467,00<i>1</i></div></div>
<svg style="left:338px;top:587px;" width="6" height="6" viewBox="0 0 6 6"><path d="M0 0h6L0 6z" fill="#0f7b24"/></svg>
<div style="left:338px;top:587px;width:24px;height:20px;overflow:hidden;font-family:'Liberation Sans', sans-serif"><div style="right:2px;transform-origin:100% 0;top:0px;text-align:right;white-space:pre;transform:scaleX(0.9);font-size:10px;line-height:12px;letter-spacing:0px;color:#000;"><i>1</i>0<i>1</i></div></div>
<svg style="left:363px;top:587px;" width="6" height="6" viewBox="0 0 6 6"><path d="M0 0h6L0 6z" fill="#0f7b24"/></svg>
<div style="left:363px;top:587px;width:52px;height:20px;overflow:hidden;font-family:'Liberation Sans', sans-serif"><div style="right:2px;transform-origin:100% 0;top:0px;text-align:right;white-space:pre;transform:scaleX(0.9);font-size:10px;line-height:12px;letter-spacing:0px;color:#000;">0</div></div>
<svg style="left:454px;top:587px;" width="6" height="6" viewBox="0 0 6 6"><path d="M0 0h6L0 6z" fill="#0f7b24"/></svg>
<div style="left:454px;top:587px;width:66px;height:20px;overflow:hidden;font-family:'Liberation Sans', sans-serif"><div style="right:2px;transform-origin:100% 0;top:0px;text-align:right;white-space:pre;transform:scaleX(0.9);font-size:10px;line-height:12px;letter-spacing:0px;color:#000;">0</div></div>
<svg style="left:567px;top:587px;" width="6" height="6" viewBox="0 0 6 6"><path d="M0 0h6L0 6z" fill="#0f7b24"/></svg>
<div style="left:567px;top:587px;width:54px;height:20px;overflow:hidden;font-family:'Liberation Sans', sans-serif"><div style="right:2px;transform-origin:100% 0;top:0px;text-align:right;white-space:pre;transform:scaleX(0.9);font-size:10px;line-height:12px;letter-spacing:0px;color:#000;">0</div></div>
<svg style="left:622px;top:587px;" width="6" height="6" viewBox="0 0 6 6"><path d="M0 0h6L0 6z" fill="#0f7b24"/></svg>
<div style="left:622px;top:587px;width:54px;height:20px;overflow:hidden;font-family:'Liberation Sans', sans-serif"><div style="right:2px;transform-origin:100% 0;top:0px;text-align:right;white-space:pre;transform:scaleX(0.9);font-size:10px;line-height:12px;letter-spacing:0px;color:#000;">0</div></div>
<svg style="left:677px;top:587px;" width="6" height="6" viewBox="0 0 6 6"><path d="M0 0h6L0 6z" fill="#0f7b24"/></svg>
<div style="left:677px;top:587px;width:59px;height:20px;overflow:hidden;font-family:'Liberation Sans', sans-serif"><div style="right:2px;transform-origin:100% 0;top:0px;text-align:right;white-space:pre;transform:scaleX(0.9);font-size:10px;line-height:12px;letter-spacing:0px;color:#000;">467,00<i>1</i></div></div>
<svg style="left:737px;top:587px;" width="6" height="6" viewBox="0 0 6 6"><path d="M0 0h6L0 6z" fill="#0f7b24"/></svg>
<div style="left:737px;top:587px;width:54px;height:20px;overflow:hidden;font-family:'Liberation Sans', sans-serif"><div style="right:2px;transform-origin:100% 0;top:0px;text-align:right;white-space:pre;transform:scaleX(0.9);font-size:10px;line-height:12px;letter-spacing:0px;color:#000;">0</div></div>
<svg style="left:792px;top:587px;" width="6" height="6" viewBox="0 0 6 6"><path d="M0 0h6L0 6z" fill="#0f7b24"/></svg>
<div style="left:792px;top:587px;width:64px;height:20px;overflow:hidden;font-family:'Liberation Sans', sans-serif"><div style="right:2px;transform-origin:100% 0;top:0px;text-align:right;white-space:pre;transform:scaleX(0.9);font-size:10px;line-height:12px;letter-spacing:0px;color:#000;">0</div></div>
<svg style="left:857px;top:587px;" width="6" height="6" viewBox="0 0 6 6"><path d="M0 0h6L0 6z" fill="#0f7b24"/></svg>
<div style="left:857px;top:587px;width:58px;height:20px;overflow:hidden;font-family:'Liberation Sans', sans-serif"><div style="right:2px;transform-origin:100% 0;top:0px;text-align:right;white-space:pre;transform:scaleX(0.9);font-size:10px;line-height:12px;letter-spacing:0px;color:#000;">0</div></div>
<svg style="left:916px;top:587px;" width="6" height="6" viewBox="0 0 6 6"><path d="M0 0h6L0 6z" fill="#0f7b24"/></svg>
<div style="left:916px;top:587px;width:54px;height:20px;overflow:hidden;font-family:'Liberation Sans', sans-serif"><div style="right:2px;transform-origin:100% 0;top:0px;text-align:right;white-space:pre;transform:scaleX(0.9);font-size:10px;line-height:12px;letter-spacing:0px;color:#000;">0</div></div>
<svg style="left:971px;top:587px;" width="6" height="6" viewBox="0 0 6 6"><path d="M0 0h6L0 6z" fill="#0f7b24"/></svg>
<div style="left:971px;top:587px;width:54px;height:20px;overflow:hidden;font-family:'Liberation Sans', sans-serif"><div style="right:2px;transform-origin:100% 0;top:0px;text-align:right;white-space:pre;transform:scaleX(0.9);font-size:10px;line-height:12px;letter-spacing:0px;color:#000;">49,699</div></div>
<div style="left:6px;top:623px;width:32px;height:1px;background:#c3c3c3;"></div>
<div style="left:6px;top:608px;width:32px;height:15px;overflow:hidden;font-family:'Liberation Sans', sans-serif"><div style="left:0;top:-1px;width:100%;text-align:center;font-size:12.4px;line-height:16px;letter-spacing:0.25px;color:#212121">2551</div></div>
<div style="left:39px;top:623px;width:1240px;height:1px;background:#d4d4d4;"></div>
<div style="left:566px;top:608px;width:1px;height:16px;background:#d4d4d4;"></div>
<div style="left:39px;top:608px;width:527px;height:15px;overflow:hidden;font-family:'Liberation Sans', sans-serif"><div style="left:3px;transform-origin:0 0;top:1px;text-align:left;white-space:pre;transform:scaleX(0.9079);font-size:10px;line-height:12px;letter-spacing:0px;color:#000;">No. Pembayaran : 50587309   Outlet : 200<i>1</i>759 - SURYA KATONG</div></div>
<div style="left:621px;top:608px;width:1px;height:16px;background:#d4d4d4;"></div>
<div style="left:676px;top:608px;width:1px;height:16px;background:#d4d4d4;"></div>
<div style="left:711px;top:608px;width:1px;height:16px;background:#d4d4d4;"></div>
<div style="left:736px;top:608px;width:1px;height:16px;background:#d4d4d4;"></div>
<div style="left:791px;top:608px;width:1px;height:16px;background:#d4d4d4;"></div>
<div style="left:824px;top:608px;width:1px;height:16px;background:#d4d4d4;"></div>
<div style="left:841px;top:608px;width:1px;height:16px;background:#d4d4d4;"></div>
<div style="left:856px;top:608px;width:1px;height:16px;background:#d4d4d4;"></div>
<div style="left:875px;top:608px;width:1px;height:16px;background:#d4d4d4;"></div>
<div style="left:915px;top:608px;width:1px;height:16px;background:#d4d4d4;"></div>
<div style="left:970px;top:608px;width:1px;height:16px;background:#d4d4d4;"></div>
<div style="left:1025px;top:608px;width:1px;height:16px;background:#d4d4d4;"></div>
<div style="left:1043px;top:608px;width:1px;height:16px;background:#d4d4d4;"></div>
<div style="left:1068px;top:608px;width:1px;height:16px;background:#d4d4d4;"></div>
<div style="left:1106px;top:608px;width:1px;height:16px;background:#d4d4d4;"></div>
<div style="left:1129px;top:608px;width:1px;height:16px;background:#d4d4d4;"></div>
<div style="left:6px;top:644px;width:32px;height:1px;background:#c3c3c3;"></div>
<div style="left:6px;top:624px;width:32px;height:20px;overflow:hidden;font-family:'Liberation Sans', sans-serif"><div style="left:0;top:4px;width:100%;text-align:center;font-size:12.4px;line-height:16px;letter-spacing:0.25px;color:#212121">2552</div></div>
<div style="left:39px;top:644px;width:1240px;height:1px;background:#d4d4d4;"></div>
<div style="left:83px;top:624px;width:1px;height:21px;background:#d4d4d4;"></div>
<svg style="left:39px;top:624px;" width="6" height="6" viewBox="0 0 6 6"><path d="M0 0h6L0 6z" fill="#0f7b24"/></svg>
<div style="left:39px;top:624px;width:44px;height:20px;overflow:hidden;font-family:'Liberation Sans', sans-serif"><div style="left:3px;transform-origin:0 0;top:0px;text-align:left;white-space:pre;transform:scaleX(0.9);font-size:10px;line-height:12px;letter-spacing:0px;color:#000;">3<i>1</i>-OCT-<br>25</div></div>
<div style="left:131px;top:624px;width:1px;height:21px;background:#d4d4d4;"></div>
<div style="left:181px;top:624px;width:1px;height:21px;background:#d4d4d4;"></div>
<svg style="left:132px;top:624px;" width="6" height="6" viewBox="0 0 6 6"><path d="M0 0h6L0 6z" fill="#0f7b24"/></svg>
<div style="left:132px;top:624px;width:49px;height:20px;overflow:hidden;font-family:'Liberation Sans', sans-serif"><div style="left:3px;transform-origin:0 0;top:0px;text-align:left;white-space:pre;transform:scaleX(0.9);font-size:10px;line-height:12px;letter-spacing:0px;color:#000;">36<i>1</i>22428</div></div>
<div style="left:215px;top:624px;width:1px;height:21px;background:#d4d4d4;"></div>
<svg style="left:182px;top:624px;" width="6" height="6" viewBox="0 0 6 6"><path d="M0 0h6L0 6z" fill="#0f7b24"/></svg>
<div style="left:182px;top:624px;width:33px;height:20px;overflow:hidden;font-family:'Liberation Sans', sans-serif"><div style="left:3px;transform-origin:0 0;top:0px;text-align:left;white-space:pre;transform:scaleX(0.9);font-size:10px;line-height:12px;letter-spacing:0px;color:#000;"><i>1</i><i>1</i>-OCT-<br>25</div></div>
<div style="left:284px;top:624px;width:1px;height:21px;background:#d4d4d4;"></div>
<svg style="left:216px;top:624px;" width="6" height="6" viewBox="0 0 6 6"><path d="M0 0h6L0 6z" fill="#0f7b24"/></svg>
<div style="left:216px;top:624px;width:68px;height:20px;overflow:hidden;font-family:'Liberation Sans', sans-serif"><div style="right:2px;transform-origin:100% 0;top:0px;text-align:right;white-space:pre;transform:scaleX(0.9);font-size:10px;line-height:12px;letter-spacing:0px;color:#000;">2,070,404</div></div>
<div style="left:337px;top:624px;width:1px;height:21px;background:#d4d4d4;"></div>
<svg style="left:285px;top:624px;" width="6" height="6" viewBox="0 0 6 6"><path d="M0 0h6L0 6z" fill="#0f7b24"/></svg>
<div style="left:285px;top:624px;width:52px;height:20px;overflow:hidden;font-family:'Liberation Sans', sans-serif"><div style="right:2px;transform-origin:100% 0;top:0px;text-align:right;white-space:pre;transform:scaleX(0.9);font-size:10px;line-height:12px;letter-spacing:0px;color:#000;">479,87<i>1</i></div></div>
<div style="left:362px;top:624px;width:1px;height:21px;background:#d4d4d4;"></div>
<svg style="left:338px;top:624px;" width="6" height="6" viewBox="0 0 6 6"><path d="M0 0h6L0 6z" fill="#0f7b24"/></svg>
<div style="left:338px;top:624px;width:24px;height:20px;overflow:hidden;font-family:'Liberation Sans', sans-serif"><div style="right:2px;transform-origin:100% 0;top:0px;text-align:right;white-space:pre;transform:scaleX(0.9);font-size:10px;line-height:12px;letter-spacing:0px;color:#000;"><i>1</i>3</div></div>
<div style="left:415px;top:624px;width:1px;height:21px;background:#d4d4d4;"></div>
<svg style="left:363px;top:624px;" width="6" height="6" viewBox="0 0 6 6"><path d="M0 0h6L0 6z" fill="#0f7b24"/></svg>
<div style="left:363px;top:624px;width:52px;height:20px;overflow:hidden;font-family:'Liberation Sans', sans-serif"><div style="right:2px;transform-origin:100% 0;top:0px;text-align:right;white-space:pre;transform:scaleX(0.9);font-size:10px;line-height:12px;letter-spacing:0px;color:#000;">0</div></div>
<div style="left:453px;top:624px;width:1px;height:21px;background:#d4d4d4;"></div>
<div style="left:520px;top:624px;width:1px;height:21px;background:#d4d4d4;"></div>
<svg style="left:454px;top:624px;" width="6" height="6" viewBox="0 0 6 6"><path d="M0 0h6L0 6z" fill="#0f7b24"/></svg>
<div style="left:454px;top:624px;width:66px;height:20px;overflow:hidden;font-family:'Liberation Sans', sans-serif"><div style="right:2px;transform-origin:100% 0;top:0px;text-align:right;white-space:pre;transform:scaleX(0.9);font-size:10px;line-height:12px;letter-spacing:0px;color:#000;">0</div></div>
<div style="left:566px;top:624px;width:1px;height:21px;background:#d4d4d4;"></div>
<div style="left:621px;top:624px;width:1px;height:21px;background:#d4d4d4;"></div>
<svg style="left:567px;top:624px;" width="6" height="6" viewBox="0 0 6 6"><path d="M0 0h6L0 6z" fill="#0f7b24"/></svg>
<div style="left:567px;top:624px;width:54px;height:20px;overflow:hidden;font-family:'Liberation Sans', sans-serif"><div style="right:2px;transform-origin:100% 0;top:0px;text-align:right;white-space:pre;transform:scaleX(0.9);font-size:10px;line-height:12px;letter-spacing:0px;color:#000;">0</div></div>
<div style="left:676px;top:624px;width:1px;height:21px;background:#d4d4d4;"></div>
<svg style="left:622px;top:624px;" width="6" height="6" viewBox="0 0 6 6"><path d="M0 0h6L0 6z" fill="#0f7b24"/></svg>
<div style="left:622px;top:624px;width:54px;height:20px;overflow:hidden;font-family:'Liberation Sans', sans-serif"><div style="right:2px;transform-origin:100% 0;top:0px;text-align:right;white-space:pre;transform:scaleX(0.9);font-size:10px;line-height:12px;letter-spacing:0px;color:#000;">0</div></div>
<div style="left:736px;top:624px;width:1px;height:21px;background:#d4d4d4;"></div>
<svg style="left:677px;top:624px;" width="6" height="6" viewBox="0 0 6 6"><path d="M0 0h6L0 6z" fill="#0f7b24"/></svg>
<div style="left:677px;top:624px;width:59px;height:20px;overflow:hidden;font-family:'Liberation Sans', sans-serif"><div style="right:2px;transform-origin:100% 0;top:0px;text-align:right;white-space:pre;transform:scaleX(0.9);font-size:10px;line-height:12px;letter-spacing:0px;color:#000;">479,87<i>1</i></div></div>
<div style="left:791px;top:624px;width:1px;height:21px;background:#d4d4d4;"></div>
<svg style="left:737px;top:624px;" width="6" height="6" viewBox="0 0 6 6"><path d="M0 0h6L0 6z" fill="#0f7b24"/></svg>
<div style="left:737px;top:624px;width:54px;height:20px;overflow:hidden;font-family:'Liberation Sans', sans-serif"><div style="right:2px;transform-origin:100% 0;top:0px;text-align:right;white-space:pre;transform:scaleX(0.9);font-size:10px;line-height:12px;letter-spacing:0px;color:#000;">0</div></div>
<div style="left:856px;top:624px;width:1px;height:21px;background:#d4d4d4;"></div>
<svg style="left:792px;top:624px;" width="6" height="6" viewBox="0 0 6 6"><path d="M0 0h6L0 6z" fill="#0f7b24"/></svg>
<div style="left:792px;top:624px;width:64px;height:20px;overflow:hidden;font-family:'Liberation Sans', sans-serif"><div style="right:2px;transform-origin:100% 0;top:0px;text-align:right;white-space:pre;transform:scaleX(0.9);font-size:10px;line-height:12px;letter-spacing:0px;color:#000;">0</div></div>
<div style="left:915px;top:624px;width:1px;height:21px;background:#d4d4d4;"></div>
<svg style="left:857px;top:624px;" width="6" height="6" viewBox="0 0 6 6"><path d="M0 0h6L0 6z" fill="#0f7b24"/></svg>
<div style="left:857px;top:624px;width:58px;height:20px;overflow:hidden;font-family:'Liberation Sans', sans-serif"><div style="right:2px;transform-origin:100% 0;top:0px;text-align:right;white-space:pre;transform:scaleX(0.9);font-size:10px;line-height:12px;letter-spacing:0px;color:#000;">0</div></div>
<div style="left:970px;top:624px;width:1px;height:21px;background:#d4d4d4;"></div>
<svg style="left:916px;top:624px;" width="6" height="6" viewBox="0 0 6 6"><path d="M0 0h6L0 6z" fill="#0f7b24"/></svg>
<div style="left:916px;top:624px;width:54px;height:20px;overflow:hidden;font-family:'Liberation Sans', sans-serif"><div style="right:2px;transform-origin:100% 0;top:0px;text-align:right;white-space:pre;transform:scaleX(0.9);font-size:10px;line-height:12px;letter-spacing:0px;color:#000;"><i>1</i>,590,533</div></div>
<div style="left:1025px;top:624px;width:1px;height:21px;background:#d4d4d4;"></div>
<svg style="left:971px;top:624px;" width="6" height="6" viewBox="0 0 6 6"><path d="M0 0h6L0 6z" fill="#0f7b24"/></svg>
<div style="left:971px;top:624px;width:54px;height:20px;overflow:hidden;font-family:'Liberation Sans', sans-serif"><div style="right:2px;transform-origin:100% 0;top:0px;text-align:right;white-space:pre;transform:scaleX(0.9);font-size:10px;line-height:12px;letter-spacing:0px;color:#000;">0</div></div>
<div style="left:6px;top:660px;width:32px;height:1px;background:#c3c3c3;"></div>
<div style="left:6px;top:645px;width:32px;height:15px;overflow:hidden;font-family:'Liberation Sans', sans-serif"><div style="left:0;top:-1px;width:100%;text-align:center;font-size:12.4px;line-height:16px;letter-spacing:0.25px;color:#212121">2553</div></div>
<div style="left:39px;top:660px;width:1240px;height:1px;background:#d4d4d4;"></div>
<div style="left:566px;top:645px;width:1px;height:16px;background:#d4d4d4;"></div>
<div style="left:39px;top:645px;width:527px;height:15px;overflow:hidden;font-family:'Liberation Sans', sans-serif"><div style="left:3px;transform-origin:0 0;top:1px;text-align:left;white-space:pre;transform:scaleX(0.9091);font-size:10px;line-height:12px;letter-spacing:0px;color:#000;">No. Pembayaran : 505873<i>1</i>0   Outlet : 6255284 - SURYA JENANGAN. TK</div></div>
<div style="left:621px;top:645px;width:1px;height:16px;background:#d4d4d4;"></div>
<div style="left:676px;top:645px;width:1px;height:16px;background:#d4d4d4;"></div>
<div style="left:711px;top:645px;width:1px;height:16px;background:#d4d4d4;"></div>
<div style="left:736px;top:645px;width:1px;height:16px;background:#d4d4d4;"></div>
<div style="left:791px;top:645px;width:1px;height:16px;background:#d4d4d4;"></div>
<div style="left:824px;top:645px;width:1px;height:16px;background:#d4d4d4;"></div>
<div style="left:841px;top:645px;width:1px;height:16px;background:#d4d4d4;"></div>
<div style="left:856px;top:645px;width:1px;height:16px;background:#d4d4d4;"></div>
<div style="left:875px;top:645px;width:1px;height:16px;background:#d4d4d4;"></div>
<div style="left:915px;top:645px;width:1px;height:16px;background:#d4d4d4;"></div>
<div style="left:970px;top:645px;width:1px;height:16px;background:#d4d4d4;"></div>
<div style="left:1025px;top:645px;width:1px;height:16px;background:#d4d4d4;"></div>
<div style="left:1043px;top:645px;width:1px;height:16px;background:#d4d4d4;"></div>
<div style="left:1068px;top:645px;width:1px;height:16px;background:#d4d4d4;"></div>
<div style="left:1106px;top:645px;width:1px;height:16px;background:#d4d4d4;"></div>
<div style="left:1129px;top:645px;width:1px;height:16px;background:#d4d4d4;"></div>
<div style="left:6px;top:681px;width:32px;height:1px;background:#c3c3c3;"></div>
<div style="left:6px;top:661px;width:32px;height:20px;overflow:hidden;font-family:'Liberation Sans', sans-serif"><div style="left:0;top:4px;width:100%;text-align:center;font-size:12.4px;line-height:16px;letter-spacing:0.25px;color:#212121">2554</div></div>
<div style="left:39px;top:681px;width:1240px;height:1px;background:#d4d4d4;"></div>
<div style="left:83px;top:661px;width:1px;height:21px;background:#d4d4d4;"></div>
<svg style="left:39px;top:661px;" width="6" height="6" viewBox="0 0 6 6"><path d="M0 0h6L0 6z" fill="#0f7b24"/></svg>
<div style="left:39px;top:661px;width:44px;height:20px;overflow:hidden;font-family:'Liberation Sans', sans-serif"><div style="left:3px;transform-origin:0 0;top:0px;text-align:left;white-space:pre;transform:scaleX(0.9);font-size:10px;line-height:12px;letter-spacing:0px;color:#000;">3<i>1</i>-OCT-<br>25</div></div>
<div style="left:131px;top:661px;width:1px;height:21px;background:#d4d4d4;"></div>
<div style="left:181px;top:661px;width:1px;height:21px;background:#d4d4d4;"></div>
<svg style="left:132px;top:661px;" width="6" height="6" viewBox="0 0 6 6"><path d="M0 0h6L0 6z" fill="#0f7b24"/></svg>
<div style="left:132px;top:661px;width:49px;height:20px;overflow:hidden;font-family:'Liberation Sans', sans-serif"><div style="left:3px;transform-origin:0 0;top:0px;text-align:left;white-space:pre;transform:scaleX(0.9);font-size:10px;line-height:12px;letter-spacing:0px;color:#000;">36<i>1</i>22<i>1</i><i>1</i>7</div></div>
<div style="left:215px;top:661px;width:1px;height:21px;background:#d4d4d4;"></div>
<svg style="left:182px;top:661px;" width="6" height="6" viewBox="0 0 6 6"><path d="M0 0h6L0 6z" fill="#0f7b24"/></svg>
<div style="left:182px;top:661px;width:33px;height:20px;overflow:hidden;font-family:'Liberation Sans', sans-serif"><div style="left:3px;transform-origin:0 0;top:0px;text-align:left;white-space:pre;transform:scaleX(0.9);font-size:10px;line-height:12px;letter-spacing:0px;color:#000;">09-<br>OCT-</div></div>
<div style="left:284px;top:661px;width:1px;height:21px;background:#d4d4d4;"></div>
<svg style="left:216px;top:661px;" width="6" height="6" viewBox="0 0 6 6"><path d="M0 0h6L0 6z" fill="#0f7b24"/></svg>
<div style="left:216px;top:661px;width:68px;height:20px;overflow:hidden;font-family:'Liberation Sans', sans-serif"><div style="right:2px;transform-origin:100% 0;top:0px;text-align:right;white-space:pre;transform:scaleX(0.9);font-size:10px;line-height:12px;letter-spacing:0px;color:#000;">2,238,26<i>1</i></div></div>
<div style="left:337px;top:661px;width:1px;height:21px;background:#d4d4d4;"></div>
<svg style="left:285px;top:661px;" width="6" height="6" viewBox="0 0 6 6"><path d="M0 0h6L0 6z" fill="#0f7b24"/></svg>
<div style="left:285px;top:661px;width:52px;height:20px;overflow:hidden;font-family:'Liberation Sans', sans-serif"><div style="right:2px;transform-origin:100% 0;top:0px;text-align:right;white-space:pre;transform:scaleX(0.9);font-size:10px;line-height:12px;letter-spacing:0px;color:#000;"><i>1</i>44,000</div></div>
<div style="left:362px;top:661px;width:1px;height:21px;background:#d4d4d4;"></div>
<svg style="left:338px;top:661px;" width="6" height="6" viewBox="0 0 6 6"><path d="M0 0h6L0 6z" fill="#0f7b24"/></svg>
<div style="left:338px;top:661px;width:24px;height:20px;overflow:hidden;font-family:'Liberation Sans', sans-serif"><div style="right:2px;transform-origin:100% 0;top:0px;text-align:right;white-space:pre;transform:scaleX(0.9);font-size:10px;line-height:12px;letter-spacing:0px;color:#000;">2<i>1</i></div></div>
<div style="left:415px;top:661px;width:1px;height:21px;background:#d4d4d4;"></div>
<svg style="left:363px;top:661px;" width="6" height="6" viewBox="0 0 6 6"><path d="M0 0h6L0 6z" fill="#0f7b24"/></svg>
<div style="left:363px;top:661px;width:52px;height:20px;overflow:hidden;font-family:'Liberation Sans', sans-serif"><div style="right:2px;transform-origin:100% 0;top:0px;text-align:right;white-space:pre;transform:scaleX(0.9);font-size:10px;line-height:12px;letter-spacing:0px;color:#000;">0</div></div>
<div style="left:453px;top:661px;width:1px;height:21px;background:#d4d4d4;"></div>
<div style="left:520px;top:661px;width:1px;height:21px;background:#d4d4d4;"></div>
<svg style="left:454px;top:661px;" width="6" height="6" viewBox="0 0 6 6"><path d="M0 0h6L0 6z" fill="#0f7b24"/></svg>
<div style="left:454px;top:661px;width:66px;height:20px;overflow:hidden;font-family:'Liberation Sans', sans-serif"><div style="right:2px;transform-origin:100% 0;top:0px;text-align:right;white-space:pre;transform:scaleX(0.9);font-size:10px;line-height:12px;letter-spacing:0px;color:#000;">0</div></div>
<div style="left:566px;top:661px;width:1px;height:21px;background:#d4d4d4;"></div>
<div style="left:621px;top:661px;width:1px;height:21px;background:#d4d4d4;"></div>
<svg style="left:567px;top:661px;" width="6" height="6" viewBox="0 0 6 6"><path d="M0 0h6L0 6z" fill="#0f7b24"/></svg>
<div style="left:567px;top:661px;width:54px;height:20px;overflow:hidden;font-family:'Liberation Sans', sans-serif"><div style="right:2px;transform-origin:100% 0;top:0px;text-align:right;white-space:pre;transform:scaleX(0.9);font-size:10px;line-height:12px;letter-spacing:0px;color:#000;">0</div></div>
<div style="left:676px;top:661px;width:1px;height:21px;background:#d4d4d4;"></div>
<svg style="left:622px;top:661px;" width="6" height="6" viewBox="0 0 6 6"><path d="M0 0h6L0 6z" fill="#0f7b24"/></svg>
<div style="left:622px;top:661px;width:54px;height:20px;overflow:hidden;font-family:'Liberation Sans', sans-serif"><div style="right:2px;transform-origin:100% 0;top:0px;text-align:right;white-space:pre;transform:scaleX(0.9);font-size:10px;line-height:12px;letter-spacing:0px;color:#000;">0</div></div>
<div style="left:736px;top:661px;width:1px;height:21px;background:#d4d4d4;"></div>
<svg style="left:677px;top:661px;" width="6" height="6" viewBox="0 0 6 6"><path d="M0 0h6L0 6z" fill="#0f7b24"/></svg>
<div style="left:677px;top:661px;width:59px;height:20px;overflow:hidden;font-family:'Liberation Sans', sans-serif"><div style="right:2px;transform-origin:100% 0;top:0px;text-align:right;white-space:pre;transform:scaleX(0.9);font-size:10px;line-height:12px;letter-spacing:0px;color:#000;"><i>1</i>44,000</div></div>
<div style="left:791px;top:661px;width:1px;height:21px;background:#d4d4d4;"></div>
<svg style="left:737px;top:661px;" width="6" height="6" viewBox="0 0 6 6"><path d="M0 0h6L0 6z" fill="#0f7b24"/></svg>
<div style="left:737px;top:661px;width:54px;height:20px;overflow:hidden;font-family:'Liberation Sans', sans-serif"><div style="right:2px;transform-origin:100% 0;top:0px;text-align:right;white-space:pre;transform:scaleX(0.9);font-size:10px;line-height:12px;letter-spacing:0px;color:#000;">0</div></div>
<div style="left:856px;top:661px;width:1px;height:21px;background:#d4d4d4;"></div>
<svg style="left:792px;top:661px;" width="6" height="6" viewBox="0 0 6 6"><path d="M0 0h6L0 6z" fill="#0f7b24"/></svg>
<div style="left:792px;top:661px;width:64px;height:20px;overflow:hidden;font-family:'Liberation Sans', sans-serif"><div style="right:2px;transform-origin:100% 0;top:0px;text-align:right;white-space:pre;transform:scaleX(0.9);font-size:10px;line-height:12px;letter-spacing:0px;color:#000;">0</div></div>
<div style="left:915px;top:661px;width:1px;height:21px;background:#d4d4d4;"></div>
<svg style="left:857px;top:661px;" width="6" height="6" viewBox="0 0 6 6"><path d="M0 0h6L0 6z" fill="#0f7b24"/></svg>
<div style="left:857px;top:661px;width:58px;height:20px;overflow:hidden;font-family:'Liberation Sans', sans-serif"><div style="right:2px;transform-origin:100% 0;top:0px;text-align:right;white-space:pre;transform:scaleX(0.9);font-size:10px;line-height:12px;letter-spacing:0px;color:#000;">0</div></div>
<div style="left:970px;top:661px;width:1px;height:21px;background:#d4d4d4;"></div>
<svg style="left:916px;top:661px;" width="6" height="6" viewBox="0 0 6 6"><path d="M0 0h6L0 6z" fill="#0f7b24"/></svg>
<div style="left:916px;top:661px;width:54px;height:20px;overflow:hidden;font-family:'Liberation Sans', sans-serif"><div style="right:2px;transform-origin:100% 0;top:0px;text-align:right;white-space:pre;transform:scaleX(0.9);font-size:10px;line-height:12px;letter-spacing:0px;color:#000;">0</div></div>
<div style="left:1025px;top:661px;width:1px;height:21px;background:#d4d4d4;"></div>
<svg style="left:971px;top:661px;" width="6" height="6" viewBox="0 0 6 6"><path d="M0 0h6L0 6z" fill="#0f7b24"/></svg>
<div style="left:971px;top:661px;width:54px;height:20px;overflow:hidden;font-family:'Liberation Sans', sans-serif"><div style="right:2px;transform-origin:100% 0;top:0px;text-align:right;white-space:pre;transform:scaleX(0.9);font-size:10px;line-height:12px;letter-spacing:0px;color:#000;">0</div></div>
<div style="left:6px;top:683px;width:1274px;height:1px;background:#a6a6a6;"></div>
<div style="left:1283px;top:480px;width:15px;height:203px;background:#dcdcdc;"></div>
<div style="left:1283px;top:482px;width:15px;height:15px;background:#fff;border:1px solid #ababab;box-sizing:border-box;"></div>
<svg style="left:1287px;top:487px;" width="8" height="5" viewBox="0 0 8 5"><path d="M0 4.2h7l-3.5-3.7z" fill="#777"/></svg>
<div style="left:1283px;top:668px;width:15px;height:15px;background:#fff;border:1px solid #ababab;box-sizing:border-box;"></div>
<svg style="left:1287px;top:673px;" width="8" height="5" viewBox="0 0 8 5"><path d="M0 0.5h7l-3.5 3.7z" fill="#777"/></svg>
<div style="left:1283px;top:520px;width:15px;height:16px;background:#fff;border:1px solid #ababab;box-sizing:border-box;"></div>
<div style="left:6px;top:683px;width:1274px;height:1px;background:#a6a6a6;"></div>
<div style="left:106px;top:683px;width:66px;height:24px;background:#fff;"></div>
<div style="left:106px;top:683px;width:1px;height:22px;background:#c6c6c6;"></div>
<div style="left:171px;top:683px;width:1px;height:22px;background:#c6c6c6;"></div>
<div style="left:106px;top:706px;width:66px;height:2px;background:#217346;"></div>
<div style="left:118px;top:689px;font-size:13px;color:#1e7145;font-weight:bold;letter-spacing:-0.357px;white-space:pre;line-height:16px;font-family:'Liberation Sans', sans-serif;">Sheet1</div>
<div style="left:184.3px;top:689px;font-size:13px;color:#444;font-weight:normal;letter-spacing:-0.501px;white-space:pre;line-height:16px;font-family:'Liberation Sans', sans-serif;">Sheet2</div>
<div style="left:236px;top:688px;width:1px;height:19px;background:#b0b0b0;"></div>
<div style="left:249.4px;top:689px;font-size:13px;color:#444;font-weight:normal;letter-spacing:-0.501px;white-space:pre;line-height:16px;font-family:'Liberation Sans', sans-serif;">Sheet3</div>
<div style="left:300px;top:688px;width:1px;height:19px;background:#b0b0b0;"></div>
<svg style="left:333px;top:688px;" width="18" height="18" viewBox="0 0 18 18"><circle cx="9" cy="9" r="7.6" fill="none" stroke="#6a6a6a" stroke-width="1.1"/><path d="M9 5v8M5 9h8" stroke="#6a6a6a" stroke-width="1.3"/></svg>
<svg style="left:31px;top:692px;" width="6" height="9" viewBox="0 0 6 9"><path d="M5.4 0.4v8L0.6 4.4z" fill="#c2c2c2"/></svg>
<svg style="left:61px;top:692px;" width="6" height="9" viewBox="0 0 6 9"><path d="M0.6 0.4v8L5.4 4.4z" fill="#c2c2c2"/></svg>
<div style="left:783px;top:692px;width:2px;height:2px;background:#a8a8a8;"></div>
<div style="left:783px;top:696px;width:2px;height:2px;background:#a8a8a8;"></div>
<div style="left:783px;top:700px;width:2px;height:2px;background:#a8a8a8;"></div>
<div style="left:800px;top:690px;width:477px;height:15px;background:#dcdcdc;"></div>
<div style="left:800px;top:690px;width:15px;height:15px;background:#fff;border:1px solid #ababab;box-sizing:border-box;"></div>
<svg style="left:805px;top:693px;" width="5" height="9" viewBox="0 0 5 9"><path d="M4.6 0.3v8.4L0.4 4.5z" fill="#666"/></svg>
<div style="left:1262px;top:690px;width:15px;height:15px;background:#fff;border:1px solid #ababab;box-sizing:border-box;"></div>
<svg style="left:1267px;top:693px;" width="5" height="9" viewBox="0 0 5 9"><path d="M0.4 0.3v8.4L4.6 4.5z" fill="#666"/></svg>
<div style="left:814px;top:690px;width:435px;height:15px;background:#fff;border:1px solid #ababab;box-sizing:border-box;"></div>
<div style="left:6px;top:711px;width:1295px;height:28px;background:#f3f3f3;"></div>
<div style="left:6px;top:711px;width:1295px;height:1px;background:#d0d0d0;"></div>
<div style="left:990px;top:712px;width:40px;height:27px;background:#c8c8c8;"></div>
<svg style="left:1003px;top:715px;" width="13" height="13" viewBox="0 0 13 13"><path d="M0.5 0.5h12v12h-12z M0.5 4.5h12 M0.5 8.5h12 M4.5 0.5v12 M8.5 0.5v12" fill="none" stroke="#666" stroke-width="1"/></svg>
<svg style="left:1043px;top:715px;" width="14" height="13" viewBox="0 0 14 13"><path d="M0.5 0.5h13v12h-13z" fill="none" stroke="#666" stroke-width="1"/><path d="M3.5 2.5h7v8h-7z M5 4.5h4 M5 6.5h4 M5 8.5h4" fill="none" stroke="#666" stroke-width="1"/></svg>
<svg style="left:1083px;top:715px;" width="14" height="13" viewBox="0 0 14 13"><path d="M0.5 0.5h13v12h-13z M4.5 0.5v7 M8.5 0.5v7 M0.5 7.5h8" fill="none" stroke="#666" stroke-width="1"/></svg>
<div style="left:1116px;top:721px;width:8px;height:1px;background:#555;"></div>
<div style="left:1129px;top:722px;width:100px;height:1px;background:#9a9a9a;"></div>
<div style="left:1177px;top:716px;width:5px;height:11px;background:#767676;"></div>
<div style="left:1233px;top:722px;width:9px;height:1px;background:#555;"></div>
<div style="left:1237px;top:718px;width:1px;height:9px;background:#555;"></div>
<div style="left:1255.8px;top:714px;font-size:11.5px;color:#444;font-weight:normal;letter-spacing:-0.955px;white-space:pre;line-height:14px;font-family:'Liberation Sans', sans-serif;">100%</div>
<div style="left:969px;top:585px;width:58px;height:24px;border:2px solid #217346;box-sizing:border-box;"></div>
<div style="left:971px;top:587px;width:54px;height:20px;border:1px solid #fff;box-sizing:border-box;"></div>
<svg style="left:972px;top:588px;" width="5" height="5" viewBox="0 0 5 5"><path d="M0 0h4.6L0 4.6z" fill="#0f7b24"/></svg>
<div style="left:1022px;top:604px;width:5px;height:5px;background:#217346;border-left:1px solid #fff;border-top:1px solid #fff;box-sizing:content-box;"></div>
<div style="left:937px;top:587px;width:20px;height:20px;background:#f1f1f1;border:1px solid #ababab;box-sizing:border-box;"></div>
<svg style="left:939px;top:589px;" width="16" height="16" viewBox="0 0 16 16"><path d="M8 0.4L15.6 8 8 15.6 0.4 8z" fill="#e9c388"/><path d="M8 4.2v5" stroke="#44546a" stroke-width="1.8"/><rect x="7.1" y="10.4" width="1.8" height="1.7" fill="#44546a"/></svg>
</body></html>
